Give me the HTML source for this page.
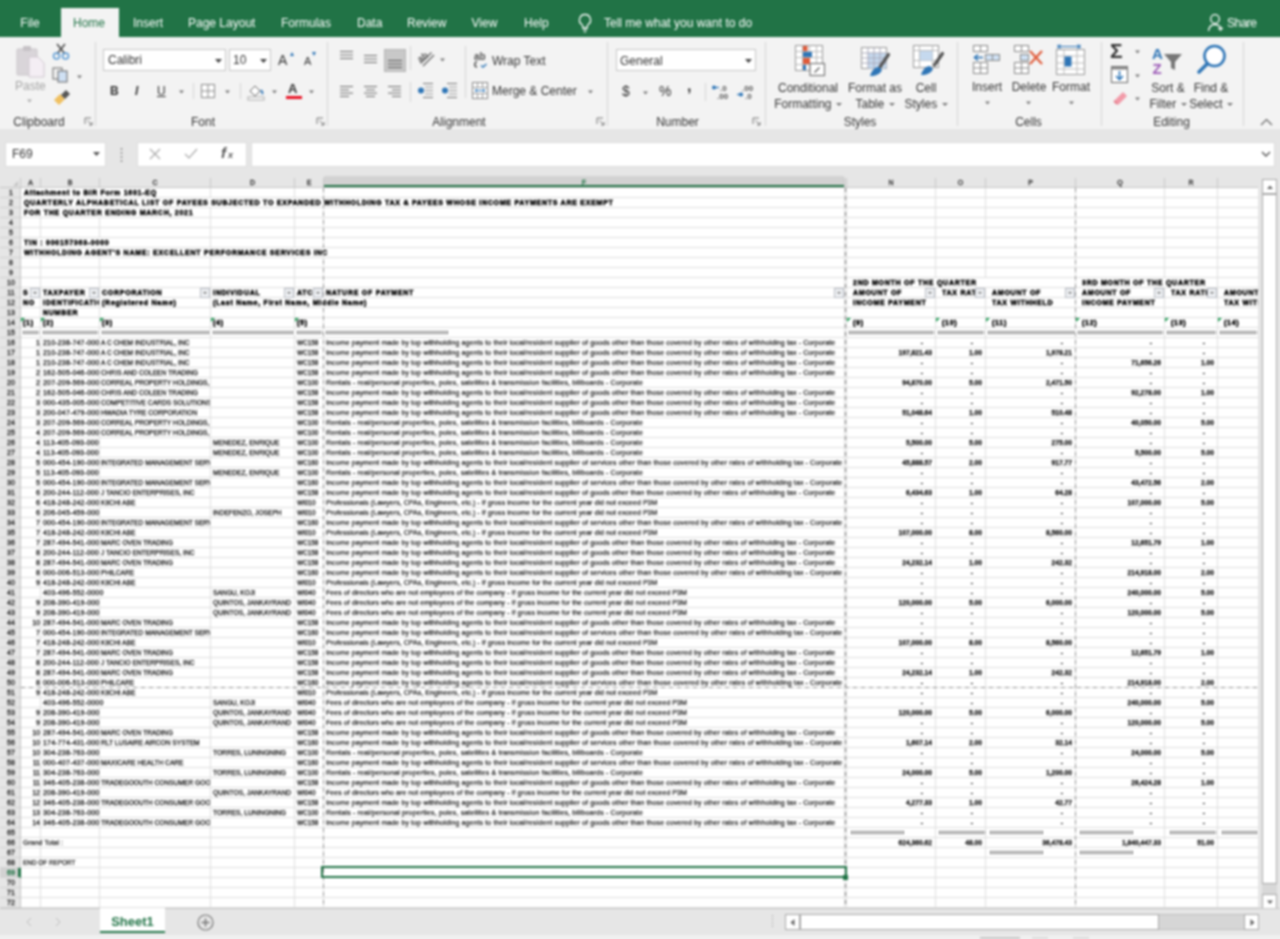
<!DOCTYPE html>
<html><head><meta charset="utf-8"><title>Excel</title>
<style>
html,body{margin:0;padding:0}
body{width:1280px;height:939px;overflow:hidden;position:relative;background:#e6e6e6;font-family:"Liberation Sans",sans-serif}
.t{position:absolute;white-space:nowrap;line-height:1.2;font-family:"Liberation Sans",sans-serif}
.c{text-align:center}
.r{position:absolute}
.s{position:absolute;overflow:visible}
.box{position:absolute;background:#fff;border:1px solid #c6c6c6;box-sizing:border-box}
.box2{position:absolute;background:#fff;border:1px solid #dcdcdc;box-sizing:border-box}
.dd{display:inline-block;width:0;height:0;border-left:3px solid transparent;border-right:3px solid transparent;border-top:3px solid #777;vertical-align:middle;margin-left:1px}
.g{position:absolute;overflow:hidden}
.gt{position:absolute;white-space:nowrap;overflow:hidden;font-family:"Liberation Sans",sans-serif;font-size:7px;line-height:10px;color:#111;-webkit-text-stroke:0.2px #111}
#root{position:absolute;left:-12px;top:-12px;width:1304px;height:963px;overflow:hidden;filter:blur(1px)}
#in{position:absolute;left:12px;top:12px;width:1280px;height:939px}
#edge{position:absolute;left:0;top:0;width:1304px;height:963px;background:linear-gradient(#217346 0 49px,#f3f3f3 49px 141px,#e6e6e6 141px 947px,#f0f0f0 947px)}
</style></head><body><div id="root"><div id="edge"></div><div id="in">
<div class="r" style="left:0px;top:0px;width:1280px;height:37px;background:#217346;"></div>
<div class="r" style="left:61px;top:8px;width:58px;height:30px;background:#f3f3f3;"></div>
<div class="t" style="left:20.3px;top:16px;font-size:12px;color:#ffffff;font-weight:normal;">File</div>
<div class="t" style="left:73px;top:16px;font-size:12px;color:#217346;font-weight:normal;">Home</div>
<div class="t" style="left:133px;top:16px;font-size:12px;color:#ffffff;font-weight:normal;">Insert</div>
<div class="t" style="left:188px;top:16px;font-size:12px;color:#ffffff;font-weight:normal;">Page Layout</div>
<div class="t" style="left:281px;top:16px;font-size:12px;color:#ffffff;font-weight:normal;">Formulas</div>
<div class="t" style="left:357px;top:16px;font-size:12px;color:#ffffff;font-weight:normal;">Data</div>
<div class="t" style="left:407px;top:16px;font-size:12px;color:#ffffff;font-weight:normal;">Review</div>
<div class="t" style="left:471.5px;top:16px;font-size:12px;color:#ffffff;font-weight:normal;">View</div>
<div class="t" style="left:524px;top:16px;font-size:12px;color:#ffffff;font-weight:normal;">Help</div>
<svg class="s" style="left:577px;top:13px;" width="16" height="20" viewBox="0 0 16 20"><path d="M8 1.5a5.5 5.5 0 0 0-3.2 10c.6.5 1 1.2 1 2v1.5h4.4V13.5c0-.8.4-1.5 1-2A5.5 5.5 0 0 0 8 1.5z" fill="none" stroke="#fff" stroke-width="1.3"/><path d="M6 17h4M6.8 19h2.4" stroke="#fff" stroke-width="1.2"/></svg>
<div class="t" style="left:604px;top:16px;font-size:12px;color:#ffffff;font-weight:normal;">Tell me what you want to do</div>
<svg class="s" style="left:1207px;top:13px;" width="17" height="19" viewBox="0 0 17 19"><circle cx="8" cy="6" r="4.3" fill="none" stroke="#fff" stroke-width="1.3"/><path d="M1.5 18c.5-4 3-6.5 6.5-6.5 2 0 3.5.6 4.6 1.7" fill="none" stroke="#fff" stroke-width="1.3"/><path d="M11 15.5h5M13.5 13v5" stroke="#fff" stroke-width="1.3"/></svg>
<div class="t" style="left:1227px;top:16px;font-size:12px;color:#ffffff;font-weight:normal;letter-spacing:-0.5px">Share</div>
<div class="r" style="left:0px;top:37px;width:1280px;height:92px;background:#f3f3f3;"></div>
<div class="r" style="left:95px;top:42px;width:1px;height:84px;background:#d4d4d4;"></div>
<div class="r" style="left:327px;top:42px;width:1px;height:84px;background:#d4d4d4;"></div>
<div class="r" style="left:607px;top:42px;width:1px;height:84px;background:#d4d4d4;"></div>
<div class="r" style="left:765px;top:42px;width:1px;height:84px;background:#d4d4d4;"></div>
<div class="r" style="left:957px;top:42px;width:1px;height:84px;background:#d4d4d4;"></div>
<div class="r" style="left:1101px;top:42px;width:1px;height:84px;background:#d4d4d4;"></div>
<div class="r" style="left:1243px;top:42px;width:1px;height:84px;background:#d4d4d4;"></div>
<div class="t c" style="left:-11px;top:115px;width:100px;font-size:12px;color:#333">Clipboard</div>
<div class="t c" style="left:153px;top:115px;width:100px;font-size:12px;color:#333">Font</div>
<div class="t c" style="left:409px;top:115px;width:100px;font-size:12px;color:#333">Alignment</div>
<div class="t c" style="left:627.5px;top:115px;width:100px;font-size:12px;color:#333">Number</div>
<div class="t c" style="left:810px;top:115px;width:100px;font-size:12px;color:#333">Styles</div>
<div class="t c" style="left:978.5px;top:115px;width:100px;font-size:12px;color:#333">Cells</div>
<div class="t c" style="left:1121.5px;top:115px;width:100px;font-size:12px;color:#333">Editing</div>
<svg class="s" style="left:84px;top:117px;" width="9" height="9" viewBox="0 0 9 9"><path d="M1 1h6M1 1v6" stroke="#777" stroke-width="1" fill="none"/><path d="M3.5 3.5L8 8M8 5v3H5" stroke="#777" stroke-width="1" fill="none"/></svg>
<svg class="s" style="left:316px;top:117px;" width="9" height="9" viewBox="0 0 9 9"><path d="M1 1h6M1 1v6" stroke="#777" stroke-width="1" fill="none"/><path d="M3.5 3.5L8 8M8 5v3H5" stroke="#777" stroke-width="1" fill="none"/></svg>
<svg class="s" style="left:596px;top:117px;" width="9" height="9" viewBox="0 0 9 9"><path d="M1 1h6M1 1v6" stroke="#777" stroke-width="1" fill="none"/><path d="M3.5 3.5L8 8M8 5v3H5" stroke="#777" stroke-width="1" fill="none"/></svg>
<svg class="s" style="left:752px;top:117px;" width="9" height="9" viewBox="0 0 9 9"><path d="M1 1h6M1 1v6" stroke="#777" stroke-width="1" fill="none"/><path d="M3.5 3.5L8 8M8 5v3H5" stroke="#777" stroke-width="1" fill="none"/></svg>
<svg class="s" style="left:1260px;top:118px;" width="13" height="8" viewBox="0 0 13 8"><path d="M1 7l5.5-5.5L12 7" stroke="#666" stroke-width="1.2" fill="none"/></svg>
<svg class="s" style="left:15px;top:44px;" width="32" height="34" viewBox="0 0 32 34"><rect x="2" y="5" width="20" height="26" rx="1" fill="#d9d5d9" stroke="#c9c5c9"/><rect x="8" y="2" width="8" height="5" rx="1" fill="#c6c2c6"/><path d="M14 13h9l6 6v14H14z" fill="#f4eef4" stroke="#d0c8d0"/></svg>
<div class="t" style="left:15px;top:79px;font-size:12px;color:#a6a6a6;font-weight:normal;">Paste</div>
<svg class="s" style="left:26px;top:99px;" width="7" height="4" viewBox="0 0 7 4"><path d="M1 0.5h5L3.5 3.5z" fill="#aaa"/></svg>
<svg class="s" style="left:52px;top:43px;" width="18" height="17" viewBox="0 0 18 17"><path d="M5 1l8 10M13 1L5 11" stroke="#444" stroke-width="1.5"/><circle cx="4.5" cy="13" r="3" fill="none" stroke="#5b9bd5" stroke-width="1.5"/><circle cx="13.5" cy="13" r="3" fill="none" stroke="#5b9bd5" stroke-width="1.5"/></svg>
<svg class="s" style="left:52px;top:67px;" width="18" height="16" viewBox="0 0 18 16"><rect x="1" y="1" width="9" height="11" fill="#f3f3f3" stroke="#666"/><rect x="6" y="4" width="9" height="11" fill="#cfe0f3" stroke="#666"/></svg>
<svg class="s" style="left:76px;top:75px;" width="7" height="4" viewBox="0 0 7 4"><path d="M1 0.5h5L3.5 3.5z" fill="#777"/></svg>
<svg class="s" style="left:53px;top:89px;" width="18" height="17" viewBox="0 0 18 17"><path d="M1 11l6-6 5 5-6 6z" fill="#f0c060"/><path d="M8 6l5-5 4 4-5 5z" fill="#555"/></svg>
<div class="box" style="left:103px;top:49px;width:123px;height:22px"></div>
<div class="t" style="left:108px;top:53px;font-size:12px;color:#333;font-weight:normal;">Calibri</div>
<svg class="s" style="left:215px;top:59px;" width="7" height="4" viewBox="0 0 7 4"><path d="M0 0h7L3.5 4z" fill="#444"/></svg>
<div class="box" style="left:229px;top:49px;width:42px;height:22px"></div>
<div class="t" style="left:233px;top:53px;font-size:12px;color:#333;font-weight:normal;">10</div>
<svg class="s" style="left:260px;top:59px;" width="7" height="4" viewBox="0 0 7 4"><path d="M0 0h7L3.5 4z" fill="#444"/></svg>
<div class="t" style="left:278px;top:52px;font-size:14px;color:#333;font-weight:normal;">A</div>
<svg class="s" style="left:290px;top:52px;" width="4" height="4" viewBox="0 0 4 4"><path d="M0 4L2 0L4 4z" fill="#2e75b6"/></svg>
<div class="t" style="left:304px;top:55px;font-size:11px;color:#333;font-weight:normal;">A</div>
<svg class="s" style="left:312px;top:52px;" width="4" height="4" viewBox="0 0 4 4"><path d="M0 0L2 4L4 0z" fill="#2e75b6"/></svg>
<div class="t" style="left:110px;top:84px;font-size:12px;color:#333;font-weight:bold;">B</div>
<div class="t" style="left:135px;top:84px;font-size:12px;color:#333;font-weight:normal;font-style:italic;font-weight:bold">I</div>
<div class="t" style="left:157px;top:84px;font-size:12px;color:#333;font-weight:normal;text-decoration:underline">U</div>
<svg class="s" style="left:178px;top:90px;" width="7" height="4" viewBox="0 0 7 4"><path d="M1 0.5h5L3.5 3.5z" fill="#777"/></svg>
<svg class="s" style="left:224px;top:90px;" width="7" height="4" viewBox="0 0 7 4"><path d="M1 0.5h5L3.5 3.5z" fill="#777"/></svg>
<svg class="s" style="left:271px;top:90px;" width="7" height="4" viewBox="0 0 7 4"><path d="M1 0.5h5L3.5 3.5z" fill="#777"/></svg>
<svg class="s" style="left:308px;top:90px;" width="7" height="4" viewBox="0 0 7 4"><path d="M1 0.5h5L3.5 3.5z" fill="#777"/></svg>
<div class="r" style="left:193px;top:83px;width:1px;height:16px;background:#d4d4d4;"></div>
<div class="r" style="left:240px;top:83px;width:1px;height:16px;background:#d4d4d4;"></div>
<svg class="s" style="left:201px;top:84px;" width="14" height="14" viewBox="0 0 14 14"><rect x="0.5" y="0.5" width="13" height="13" fill="#fff" stroke="#8a8a8a"/><path d="M7 1v12M1 7h12" stroke="#8a8a8a"/></svg>
<svg class="s" style="left:247px;top:82px;" width="18" height="18" viewBox="0 0 18 18"><path d="M3 9l5-5 5 5-5 5z" fill="#fff" stroke="#666"/><path d="M14 8c1.5 2 2 3 1 4" stroke="#2e75b6" stroke-width="2" fill="none"/><rect x="1" y="15" width="16" height="3" fill="#fff" stroke="#aaa"/></svg>
<div class="t" style="left:288px;top:81px;font-size:13px;color:#333;font-weight:bold;">A</div>
<div class="r" style="left:286px;top:96px;width:16px;height:3px;background:#e81123;"></div>
<svg class="s" style="left:340px;top:51px;" width="16" height="11" viewBox="0 0 16 11"><rect x="0" y="0.0" width="13" height="1" fill="#6a6a6a"/><rect x="0" y="3.5" width="13" height="1" fill="#6a6a6a"/><rect x="0" y="7.0" width="13" height="1" fill="#6a6a6a"/></svg>
<svg class="s" style="left:364px;top:55px;" width="16" height="11" viewBox="0 0 16 11"><rect x="0" y="0.0" width="13" height="1" fill="#6a6a6a"/><rect x="0" y="3.5" width="13" height="1" fill="#6a6a6a"/><rect x="0" y="7.0" width="13" height="1" fill="#6a6a6a"/></svg>
<div class="r" style="left:384px;top:49px;width:22px;height:23px;background:#c8c8c8;border:1px solid #b4b4b4;box-sizing:border-box"></div>
<svg class="s" style="left:388px;top:60px;" width="16" height="11" viewBox="0 0 16 11"><rect x="0" y="0.0" width="14" height="1" fill="#5a5a5a"/><rect x="0" y="3.5" width="14" height="1" fill="#5a5a5a"/><rect x="0" y="7.0" width="14" height="1" fill="#5a5a5a"/></svg>
<div class="r" style="left:410px;top:46px;width:1px;height:24px;background:#d4d4d4;"></div>
<svg class="s" style="left:417px;top:50px;" width="20" height="18" viewBox="0 0 20 18"><path d="M6 16L17 5M3.5 13.5L14.5 2.5" stroke="#666" stroke-width="1.3"/><text x="1" y="10" font-size="9" fill="#555" font-family="Liberation Sans" font-weight="bold" transform="rotate(-35 6 8)">ab</text></svg>
<svg class="s" style="left:439px;top:58px;" width="7" height="4" viewBox="0 0 7 4"><path d="M1 0.5h5L3.5 3.5z" fill="#777"/></svg>
<div class="r" style="left:465px;top:46px;width:1px;height:52px;background:#d4d4d4;"></div>
<svg class="s" style="left:473px;top:51px;" width="16" height="17" viewBox="0 0 16 17"><text x="1" y="9" font-size="10" fill="#555" font-family="Liberation Sans" font-weight="bold">ab</text><path d="M4 10.5c-3 1-3 5 0 5.5" stroke="#555" stroke-width="1.6" fill="none"/><path d="M8 14.5l2 1.5 3.5-3" stroke="#2e75b6" stroke-width="1.4" fill="none"/></svg>
<div class="t" style="left:492px;top:54px;font-size:12px;color:#333;font-weight:normal;">Wrap Text</div>
<svg class="s" style="left:340px;top:86px;" width="16" height="14" viewBox="0 0 16 14"><rect x="0" y="0.0" width="13" height="1" fill="#6a6a6a"/><rect x="0" y="3.3" width="9" height="1" fill="#6a6a6a"/><rect x="0" y="6.6" width="13" height="1" fill="#6a6a6a"/><rect x="0" y="9.9" width="9" height="1" fill="#6a6a6a"/></svg>
<svg class="s" style="left:364px;top:86px;" width="16" height="14" viewBox="0 0 16 14"><rect x="0" y="0.0" width="13" height="1" fill="#6a6a6a"/><rect x="2" y="3.3" width="9" height="1" fill="#6a6a6a"/><rect x="0" y="6.6" width="13" height="1" fill="#6a6a6a"/><rect x="2" y="9.9" width="9" height="1" fill="#6a6a6a"/></svg>
<svg class="s" style="left:388px;top:86px;" width="16" height="14" viewBox="0 0 16 14"><rect x="0" y="0.0" width="13" height="1" fill="#6a6a6a"/><rect x="4" y="3.3" width="9" height="1" fill="#6a6a6a"/><rect x="0" y="6.6" width="13" height="1" fill="#6a6a6a"/><rect x="4" y="9.9" width="9" height="1" fill="#6a6a6a"/></svg>
<div class="r" style="left:410px;top:82px;width:1px;height:20px;background:#d4d4d4;"></div>
<svg class="s" style="left:417px;top:83px;" width="17" height="15" viewBox="0 0 17 15"><rect x="6" y="0" width="10" height="1" fill="#777"/><rect x="8" y="3.5" width="8" height="1" fill="#999"/><rect x="8" y="7" width="8" height="1" fill="#999"/><rect x="8" y="10.5" width="8" height="1" fill="#999"/><rect x="6" y="14" width="10" height="1" fill="#777"/><circle cx="4" cy="7.5" r="3" fill="#2e75b6"/></svg>
<svg class="s" style="left:441px;top:83px;" width="17" height="15" viewBox="0 0 17 15"><rect x="6" y="0" width="10" height="1" fill="#777"/><rect x="8" y="3.5" width="8" height="1" fill="#999"/><rect x="8" y="7" width="8" height="1" fill="#999"/><rect x="8" y="10.5" width="8" height="1" fill="#999"/><rect x="6" y="14" width="10" height="1" fill="#777"/><circle cx="4" cy="7.5" r="3" fill="#2e75b6"/></svg>
<svg class="s" style="left:472px;top:82px;" width="17" height="17" viewBox="0 0 17 17"><rect x="0.5" y="0.5" width="15" height="16" fill="#fff" stroke="#888"/><path d="M0.5 5.5h15M0.5 11.5h15M5.5 0.5v5M10.5 0.5v5M5.5 11.5v5M10.5 11.5v5" stroke="#999"/><path d="M3 8.5h10M3 8.5l2-1.5M3 8.5l2 1.5M13 8.5l-2-1.5M13 8.5l-2 1.5" stroke="#2e75b6"/></svg>
<div class="t" style="left:492px;top:84px;font-size:12px;color:#333;font-weight:normal;">Merge &amp; Center</div>
<svg class="s" style="left:587px;top:90px;" width="7" height="4" viewBox="0 0 7 4"><path d="M1 0.5h5L3.5 3.5z" fill="#777"/></svg>
<div class="box" style="left:616px;top:49px;width:140px;height:22px"></div>
<div class="t" style="left:620px;top:54px;font-size:12px;color:#333;font-weight:normal;">General</div>
<svg class="s" style="left:745px;top:59px;" width="7" height="4" viewBox="0 0 7 4"><path d="M0 0h7L3.5 4z" fill="#444"/></svg>
<div class="t" style="left:622px;top:83px;font-size:14px;color:#333;font-weight:normal;">$</div>
<svg class="s" style="left:642px;top:91px;" width="7" height="4" viewBox="0 0 7 4"><path d="M1 0.5h5L3.5 3.5z" fill="#777"/></svg>
<div class="t" style="left:659px;top:83px;font-size:14px;color:#333;font-weight:normal;">%</div>
<div class="t" style="left:687px;top:76px;font-size:16px;color:#333;font-weight:bold;">,</div>
<div class="r" style="left:705px;top:83px;width:1px;height:18px;background:#d4d4d4;"></div>
<svg class="s" style="left:711px;top:83px;" width="20" height="17" viewBox="0 0 20 17"><text x="9" y="8" font-size="8" fill="#555" font-family="Liberation Sans" font-weight="bold">.0</text><text x="6" y="15.5" font-size="8" fill="#555" font-family="Liberation Sans" font-weight="bold">.00</text><circle cx="3" cy="4.5" r="2" fill="#2e75b6"/><path d="M3 4.5h5" stroke="#2e75b6" stroke-width="1.2"/></svg>
<svg class="s" style="left:736px;top:83px;" width="20" height="17" viewBox="0 0 20 17"><text x="6" y="8" font-size="8" fill="#555" font-family="Liberation Sans" font-weight="bold">.00</text><text x="9" y="15.5" font-size="8" fill="#555" font-family="Liberation Sans" font-weight="bold">.0</text><circle cx="5" cy="11.5" r="2" fill="#2e75b6"/><path d="M1 11.5h6" stroke="#2e75b6" stroke-width="1.2"/></svg>
<svg class="s" style="left:795px;top:45px;" width="31" height="31" viewBox="0 0 31 31"><rect x="0.5" y="0.5" width="27" height="25" fill="#fff" stroke="#999"/><path d="M7.5 0.5v25M14.5 0.5v25M21.5 0.5v25M0.5 6.5h27M0.5 12.5h27M0.5 19.5h27" stroke="#bbb"/><rect x="8" y="1" width="4.5" height="5" fill="#e05b3a"/><rect x="8" y="7" width="9" height="5" fill="#2e75b6"/><rect x="8" y="13" width="7" height="6" fill="#e05b3a"/><rect x="8" y="20" width="3" height="5" fill="#2e75b6"/><rect x="15" y="18.5" width="14.5" height="12" fill="#fff" stroke="#777" stroke-width="1.2"/><path d="M19.5 27.5l5-5" stroke="#666" stroke-width="1.5"/></svg>
<div class="t c" style="left:768px;top:80px;width:80px;font-size:12px;color:#333;line-height:16px">Conditional<br>Formatting <span class="dd"></span></div>
<svg class="s" style="left:861px;top:45px;" width="32" height="32" viewBox="0 0 32 32"><rect x="0.5" y="2.5" width="25" height="21" fill="#fff" stroke="#999"/><rect x="7" y="8" width="18.5" height="15.5" fill="#c5d9ee"/><path d="M7 2.5v21M13 2.5v21M19 2.5v21M0.5 8h25M0.5 13h25M0.5 18h25" stroke="#aab"/><path d="M27.5 9.5L19 22" stroke="#555" stroke-width="3.2" stroke-linecap="round"/><path d="M9 31c1-4 4-9 9-9l3 3c-2 4-6 6-12 6z" fill="#2e75b6"/></svg>
<div class="t c" style="left:835px;top:80px;width:80px;font-size:12px;color:#333;line-height:16px">Format as<br>Table <span class="dd"></span></div>
<svg class="s" style="left:913px;top:45px;" width="31" height="32" viewBox="0 0 31 32"><rect x="0.5" y="0.5" width="25" height="22" fill="#fff" stroke="#999"/><path d="M6.5 0.5v22M19.5 0.5v22M0.5 5.5h25M0.5 15.5h25" stroke="#bbb"/><rect x="7" y="6" width="12.5" height="9.5" fill="#c5d9ee"/><path d="M29.5 8.5L21.5 20" stroke="#555" stroke-width="3.2" stroke-linecap="round"/><path d="M8 30c1-4 4-9 9-9l3 3c-2 4-6 6-12 6z" fill="#2e75b6"/></svg>
<div class="t c" style="left:886px;top:80px;width:80px;font-size:12px;color:#333;line-height:16px">Cell<br>Styles <span class="dd"></span></div>
<svg class="s" style="left:972px;top:44px;" width="30" height="31" viewBox="0 0 30 31"><rect x="1.5" y="1.5" width="7" height="6" fill="#fff" stroke="#888"/><rect x="8.5" y="1.5" width="7" height="6" fill="#fff" stroke="#888"/><rect x="13.5" y="10.5" width="7" height="6" fill="#cfe0f3" stroke="#888"/><rect x="20.5" y="10.5" width="7" height="6" fill="#cfe0f3" stroke="#888"/><path d="M11 13.5H3M6 10.5L2.5 13.5 6 16.5" stroke="#2e75b6" stroke-width="1.6" fill="none"/><rect x="1.5" y="18.5" width="14" height="11" fill="#fff" stroke="#888"/><path d="M8.5 18.5v11M1.5 24h14" stroke="#888"/></svg>
<svg class="s" style="left:1013px;top:44px;" width="33" height="31" viewBox="0 0 33 31"><rect x="1.5" y="1.5" width="7" height="6" fill="#fff" stroke="#888"/><rect x="8.5" y="1.5" width="7" height="6" fill="#fff" stroke="#888"/><rect x="7.5" y="10.5" width="8" height="6" fill="#cfe0f3" stroke="#888"/><path d="M17 7l12 13M29 7L17 20" stroke="#e05b3a" stroke-width="2.2"/><rect x="1.5" y="18.5" width="14" height="11" fill="#fff" stroke="#888"/><path d="M8.5 18.5v11M1.5 24h14" stroke="#888"/></svg>
<svg class="s" style="left:1056px;top:44px;" width="31" height="33" viewBox="0 0 31 33"><path d="M2 2.5h22M2 0.5v4M24 0.5v4M2 2.5l3-2M2 2.5l3 2M24 2.5l-3-2M24 2.5l-3 2" stroke="#2e75b6" fill="none"/><rect x="0.5" y="5.5" width="28" height="25" fill="#fff" stroke="#999"/><path d="M0.5 12h28M0.5 19h28M0.5 25h28M8 5.5v25M21 5.5v25" stroke="#bbb"/><rect x="8.5" y="12.5" width="7" height="10" fill="#2e75b6"/></svg>
<div class="t c" style="left:957px;top:80px;width:60px;font-size:12px;color:#333">Insert</div>
<div class="t c" style="left:999px;top:80px;width:60px;font-size:12px;color:#333">Delete</div>
<div class="t c" style="left:1041px;top:80px;width:60px;font-size:12px;color:#333">Format</div>
<svg class="s" style="left:984px;top:101px;" width="7" height="4" viewBox="0 0 7 4"><path d="M1 0.5h5L3.5 3.5z" fill="#777"/></svg>
<svg class="s" style="left:1025px;top:101px;" width="7" height="4" viewBox="0 0 7 4"><path d="M1 0.5h5L3.5 3.5z" fill="#777"/></svg>
<svg class="s" style="left:1068px;top:101px;" width="7" height="4" viewBox="0 0 7 4"><path d="M1 0.5h5L3.5 3.5z" fill="#777"/></svg>
<div class="t" style="left:1110px;top:38px;font-size:21px;color:#333;font-weight:bold;">Σ</div>
<svg class="s" style="left:1134px;top:50px;" width="7" height="4" viewBox="0 0 7 4"><path d="M1 0.5h5L3.5 3.5z" fill="#777"/></svg>
<svg class="s" style="left:1111px;top:66px;" width="17" height="17" viewBox="0 0 17 17"><rect x="0.5" y="0.5" width="16" height="16" fill="#fff" stroke="#666"/><rect x="0.5" y="0.5" width="16" height="3" fill="#888"/><path d="M8.5 5v8M5 10l3.5 3.5L12 10" stroke="#2e75b6" stroke-width="1.6" fill="none"/></svg>
<svg class="s" style="left:1134px;top:74px;" width="7" height="4" viewBox="0 0 7 4"><path d="M1 0.5h5L3.5 3.5z" fill="#777"/></svg>
<svg class="s" style="left:1112px;top:90px;" width="16" height="14" viewBox="0 0 16 14"><path d="M2 11l9-9 4 4-9 9z" fill="#f29aa8"/><path d="M2 11l3 3" stroke="#e07080" stroke-width="1.5"/></svg>
<svg class="s" style="left:1134px;top:97px;" width="7" height="4" viewBox="0 0 7 4"><path d="M1 0.5h5L3.5 3.5z" fill="#777"/></svg>
<svg class="s" style="left:1151px;top:45px;" width="33" height="30" viewBox="0 0 33 30"><text x="1" y="14" font-size="15" fill="#2e75b6" font-family="Liberation Sans" font-weight="bold">A</text><text x="1.5" y="29" font-size="15" fill="#9b59b6" font-family="Liberation Sans" font-weight="bold">Z</text><path d="M13 9h18l-7 8v8l-4-2v-6z" fill="#777"/></svg>
<div class="t c" style="left:1128px;top:80px;width:80px;font-size:12px;color:#333;line-height:16px">Sort &amp;<br>Filter <span class="dd"></span></div>
<svg class="s" style="left:1196px;top:43px;" width="32" height="32" viewBox="0 0 32 32"><circle cx="18.5" cy="13" r="10" fill="#fff" stroke="#2e75b6" stroke-width="2.6"/><path d="M11 21L3 29" stroke="#2e75b6" stroke-width="3.6" stroke-linecap="round"/></svg>
<div class="t c" style="left:1171px;top:80px;width:80px;font-size:12px;color:#333;line-height:16px">Find &amp;<br>Select <span class="dd"></span></div>
<div class="r" style="left:0px;top:129px;width:1280px;height:59px;background:#e6e6e6;"></div>
<div class="box2" style="left:5px;top:142px;width:101px;height:25px"></div>
<div class="t" style="left:12px;top:147px;font-size:12px;color:#333;font-weight:normal;">F69</div>
<svg class="s" style="left:93px;top:152px;" width="7" height="4" viewBox="0 0 7 4"><path d="M0 0h7L3.5 4z" fill="#555"/></svg>
<svg class="s" style="left:120px;top:147px;" width="3" height="16" viewBox="0 0 3 16"><circle cx="1.5" cy="2" r="0.9" fill="#888"/><circle cx="1.5" cy="6" r="0.9" fill="#888"/><circle cx="1.5" cy="10" r="0.9" fill="#888"/><circle cx="1.5" cy="14" r="0.9" fill="#888"/></svg>
<div class="box2" style="left:137px;top:142px;width:110px;height:25px"></div>
<svg class="s" style="left:149px;top:148px;" width="12" height="12" viewBox="0 0 12 12"><path d="M1 1l10 10M11 1L1 11" stroke="#aaa" stroke-width="1.2"/></svg>
<svg class="s" style="left:184px;top:148px;" width="14" height="12" viewBox="0 0 14 12"><path d="M1 6l4 4 8-9" stroke="#aaa" stroke-width="1.2" fill="none"/></svg>
<div class="t" style="left:221px;top:144px;font-size:15px;color:#555;font-weight:normal;font-style:italic;font-weight:bold;font-family:"Liberation Serif",serif">f</div>
<div class="t" style="left:228px;top:150px;font-size:9px;color:#555;font-weight:normal;font-style:italic;font-weight:bold;font-family:"Liberation Serif",serif">x</div>
<div class="box2" style="left:251px;top:142px;width:1024px;height:25px"></div>
<svg class="s" style="left:1261px;top:151px;" width="10" height="6" viewBox="0 0 10 6"><path d="M1 1l4 4 4-4" stroke="#555" stroke-width="1.4" fill="none"/></svg>
<div class="r" style="left:21px;top:188px;width:1237px;height:720px;background:#fff"></div>
<div class="r" style="left:0px;top:176px;width:1258px;height:11px;background:#e6e6e6"></div>
<div class="r" style="left:324px;top:176px;width:520px;height:11px;background:#d2d2d2"></div>
<div class="r" style="left:0px;top:187px;width:1258px;height:1px;background:#c4c4c4"></div>
<div class="r" style="left:324px;top:185px;width:521px;height:2px;background:#217346"></div>
<div class="r" style="left:40px;top:178px;width:1px;height:9px;background:#c8c8c8"></div>
<div class="r" style="left:99px;top:178px;width:1px;height:9px;background:#c8c8c8"></div>
<div class="r" style="left:210px;top:178px;width:1px;height:9px;background:#c8c8c8"></div>
<div class="r" style="left:294px;top:178px;width:1px;height:9px;background:#c8c8c8"></div>
<div class="r" style="left:323px;top:178px;width:1px;height:9px;background:#c8c8c8"></div>
<div class="r" style="left:844px;top:178px;width:1px;height:9px;background:#c8c8c8"></div>
<div class="r" style="left:935px;top:178px;width:1px;height:9px;background:#c8c8c8"></div>
<div class="r" style="left:985px;top:178px;width:1px;height:9px;background:#c8c8c8"></div>
<div class="r" style="left:1075px;top:178px;width:1px;height:9px;background:#c8c8c8"></div>
<div class="r" style="left:1164px;top:178px;width:1px;height:9px;background:#c8c8c8"></div>
<div class="r" style="left:1217px;top:178px;width:1px;height:9px;background:#c8c8c8"></div>
<div class="r" style="left:846px;top:178px;width:1px;height:9px;background:#c8c8c8"></div>
<div class="r" style="left:20px;top:178px;width:1px;height:9px;background:#c8c8c8"></div>
<svg class="s" style="left:13px;top:181px" width="5" height="5"><path d="M5 0v5H0z" fill="#c4c4c4"/></svg>
<div class="gt" style="left:21px;top:178px;width:19px;height:9px;text-align:center;color:#333;-webkit-text-stroke:0.35px #333;font-size:7px;line-height:10px">A</div>
<div class="gt" style="left:41px;top:178px;width:58px;height:9px;text-align:center;color:#333;-webkit-text-stroke:0.35px #333;font-size:7px;line-height:10px">B</div>
<div class="gt" style="left:100px;top:178px;width:110px;height:9px;text-align:center;color:#333;-webkit-text-stroke:0.35px #333;font-size:7px;line-height:10px">C</div>
<div class="gt" style="left:211px;top:178px;width:83px;height:9px;text-align:center;color:#333;-webkit-text-stroke:0.35px #333;font-size:7px;line-height:10px">D</div>
<div class="gt" style="left:295px;top:178px;width:28px;height:9px;text-align:center;color:#333;-webkit-text-stroke:0.35px #333;font-size:7px;line-height:10px">E</div>
<div class="gt" style="left:324px;top:178px;width:520px;height:9px;text-align:center;color:#217346;-webkit-text-stroke:0.35px #217346;font-size:7px;line-height:10px">F</div>
<div class="gt" style="left:847px;top:178px;width:88px;height:9px;text-align:center;color:#333;-webkit-text-stroke:0.35px #333;font-size:7px;line-height:10px">N</div>
<div class="gt" style="left:936px;top:178px;width:49px;height:9px;text-align:center;color:#333;-webkit-text-stroke:0.35px #333;font-size:7px;line-height:10px">O</div>
<div class="gt" style="left:986px;top:178px;width:89px;height:9px;text-align:center;color:#333;-webkit-text-stroke:0.35px #333;font-size:7px;line-height:10px">P</div>
<div class="gt" style="left:1076px;top:178px;width:88px;height:9px;text-align:center;color:#333;-webkit-text-stroke:0.35px #333;font-size:7px;line-height:10px">Q</div>
<div class="gt" style="left:1165px;top:178px;width:52px;height:9px;text-align:center;color:#333;-webkit-text-stroke:0.35px #333;font-size:7px;line-height:10px">R</div>
<div class="r" style="left:0px;top:188px;width:20px;height:720px;background:#e6e6e6"></div>
<div class="r" style="left:20px;top:188px;width:1px;height:720px;background:#c4c4c4"></div>
<div class="r" style="left:0px;top:868px;width:20px;height:10px;background:#d2d2d2"></div>
<div class="r" style="left:18px;top:868px;width:3px;height:10px;background:#217346"></div>
<div class="gt" style="left:1px;top:188px;width:20px;height:9px;text-align:center;color:#333;-webkit-text-stroke:0.35px #333">1</div>
<div class="r" style="left:0px;top:197px;width:20px;height:1px;background:#d0d0d0"></div>
<div class="gt" style="left:1px;top:198px;width:20px;height:9px;text-align:center;color:#333;-webkit-text-stroke:0.35px #333">2</div>
<div class="r" style="left:0px;top:207px;width:20px;height:1px;background:#d0d0d0"></div>
<div class="gt" style="left:1px;top:208px;width:20px;height:9px;text-align:center;color:#333;-webkit-text-stroke:0.35px #333">3</div>
<div class="r" style="left:0px;top:217px;width:20px;height:1px;background:#d0d0d0"></div>
<div class="gt" style="left:1px;top:218px;width:20px;height:9px;text-align:center;color:#333;-webkit-text-stroke:0.35px #333">4</div>
<div class="r" style="left:0px;top:227px;width:20px;height:1px;background:#d0d0d0"></div>
<div class="gt" style="left:1px;top:228px;width:20px;height:9px;text-align:center;color:#333;-webkit-text-stroke:0.35px #333">5</div>
<div class="r" style="left:0px;top:237px;width:20px;height:1px;background:#d0d0d0"></div>
<div class="gt" style="left:1px;top:238px;width:20px;height:9px;text-align:center;color:#333;-webkit-text-stroke:0.35px #333">6</div>
<div class="r" style="left:0px;top:247px;width:20px;height:1px;background:#d0d0d0"></div>
<div class="gt" style="left:1px;top:248px;width:20px;height:9px;text-align:center;color:#333;-webkit-text-stroke:0.35px #333">7</div>
<div class="r" style="left:0px;top:257px;width:20px;height:1px;background:#d0d0d0"></div>
<div class="gt" style="left:1px;top:258px;width:20px;height:9px;text-align:center;color:#333;-webkit-text-stroke:0.35px #333">8</div>
<div class="r" style="left:0px;top:267px;width:20px;height:1px;background:#d0d0d0"></div>
<div class="gt" style="left:1px;top:268px;width:20px;height:9px;text-align:center;color:#333;-webkit-text-stroke:0.35px #333">9</div>
<div class="r" style="left:0px;top:277px;width:20px;height:1px;background:#d0d0d0"></div>
<div class="gt" style="left:1px;top:278px;width:20px;height:9px;text-align:center;color:#333;-webkit-text-stroke:0.35px #333">10</div>
<div class="r" style="left:0px;top:287px;width:20px;height:1px;background:#d0d0d0"></div>
<div class="gt" style="left:1px;top:288px;width:20px;height:9px;text-align:center;color:#333;-webkit-text-stroke:0.35px #333">11</div>
<div class="r" style="left:0px;top:297px;width:20px;height:1px;background:#d0d0d0"></div>
<div class="gt" style="left:1px;top:298px;width:20px;height:9px;text-align:center;color:#333;-webkit-text-stroke:0.35px #333">12</div>
<div class="r" style="left:0px;top:307px;width:20px;height:1px;background:#d0d0d0"></div>
<div class="gt" style="left:1px;top:308px;width:20px;height:9px;text-align:center;color:#333;-webkit-text-stroke:0.35px #333">13</div>
<div class="r" style="left:0px;top:317px;width:20px;height:1px;background:#d0d0d0"></div>
<div class="gt" style="left:1px;top:318px;width:20px;height:9px;text-align:center;color:#333;-webkit-text-stroke:0.35px #333">14</div>
<div class="r" style="left:0px;top:327px;width:20px;height:1px;background:#d0d0d0"></div>
<div class="gt" style="left:1px;top:328px;width:20px;height:9px;text-align:center;color:#333;-webkit-text-stroke:0.35px #333">15</div>
<div class="r" style="left:0px;top:337px;width:20px;height:1px;background:#d0d0d0"></div>
<div class="gt" style="left:1px;top:338px;width:20px;height:9px;text-align:center;color:#333;-webkit-text-stroke:0.35px #333">16</div>
<div class="r" style="left:0px;top:347px;width:20px;height:1px;background:#d0d0d0"></div>
<div class="gt" style="left:1px;top:348px;width:20px;height:9px;text-align:center;color:#333;-webkit-text-stroke:0.35px #333">17</div>
<div class="r" style="left:0px;top:357px;width:20px;height:1px;background:#d0d0d0"></div>
<div class="gt" style="left:1px;top:358px;width:20px;height:9px;text-align:center;color:#333;-webkit-text-stroke:0.35px #333">18</div>
<div class="r" style="left:0px;top:367px;width:20px;height:1px;background:#d0d0d0"></div>
<div class="gt" style="left:1px;top:368px;width:20px;height:9px;text-align:center;color:#333;-webkit-text-stroke:0.35px #333">19</div>
<div class="r" style="left:0px;top:377px;width:20px;height:1px;background:#d0d0d0"></div>
<div class="gt" style="left:1px;top:378px;width:20px;height:9px;text-align:center;color:#333;-webkit-text-stroke:0.35px #333">20</div>
<div class="r" style="left:0px;top:387px;width:20px;height:1px;background:#d0d0d0"></div>
<div class="gt" style="left:1px;top:388px;width:20px;height:9px;text-align:center;color:#333;-webkit-text-stroke:0.35px #333">21</div>
<div class="r" style="left:0px;top:397px;width:20px;height:1px;background:#d0d0d0"></div>
<div class="gt" style="left:1px;top:398px;width:20px;height:9px;text-align:center;color:#333;-webkit-text-stroke:0.35px #333">22</div>
<div class="r" style="left:0px;top:407px;width:20px;height:1px;background:#d0d0d0"></div>
<div class="gt" style="left:1px;top:408px;width:20px;height:9px;text-align:center;color:#333;-webkit-text-stroke:0.35px #333">23</div>
<div class="r" style="left:0px;top:417px;width:20px;height:1px;background:#d0d0d0"></div>
<div class="gt" style="left:1px;top:418px;width:20px;height:9px;text-align:center;color:#333;-webkit-text-stroke:0.35px #333">24</div>
<div class="r" style="left:0px;top:427px;width:20px;height:1px;background:#d0d0d0"></div>
<div class="gt" style="left:1px;top:428px;width:20px;height:9px;text-align:center;color:#333;-webkit-text-stroke:0.35px #333">25</div>
<div class="r" style="left:0px;top:437px;width:20px;height:1px;background:#d0d0d0"></div>
<div class="gt" style="left:1px;top:438px;width:20px;height:9px;text-align:center;color:#333;-webkit-text-stroke:0.35px #333">26</div>
<div class="r" style="left:0px;top:447px;width:20px;height:1px;background:#d0d0d0"></div>
<div class="gt" style="left:1px;top:448px;width:20px;height:9px;text-align:center;color:#333;-webkit-text-stroke:0.35px #333">27</div>
<div class="r" style="left:0px;top:457px;width:20px;height:1px;background:#d0d0d0"></div>
<div class="gt" style="left:1px;top:458px;width:20px;height:9px;text-align:center;color:#333;-webkit-text-stroke:0.35px #333">28</div>
<div class="r" style="left:0px;top:467px;width:20px;height:1px;background:#d0d0d0"></div>
<div class="gt" style="left:1px;top:468px;width:20px;height:9px;text-align:center;color:#333;-webkit-text-stroke:0.35px #333">29</div>
<div class="r" style="left:0px;top:477px;width:20px;height:1px;background:#d0d0d0"></div>
<div class="gt" style="left:1px;top:478px;width:20px;height:9px;text-align:center;color:#333;-webkit-text-stroke:0.35px #333">30</div>
<div class="r" style="left:0px;top:487px;width:20px;height:1px;background:#d0d0d0"></div>
<div class="gt" style="left:1px;top:488px;width:20px;height:9px;text-align:center;color:#333;-webkit-text-stroke:0.35px #333">31</div>
<div class="r" style="left:0px;top:497px;width:20px;height:1px;background:#d0d0d0"></div>
<div class="gt" style="left:1px;top:498px;width:20px;height:9px;text-align:center;color:#333;-webkit-text-stroke:0.35px #333">32</div>
<div class="r" style="left:0px;top:507px;width:20px;height:1px;background:#d0d0d0"></div>
<div class="gt" style="left:1px;top:508px;width:20px;height:9px;text-align:center;color:#333;-webkit-text-stroke:0.35px #333">33</div>
<div class="r" style="left:0px;top:517px;width:20px;height:1px;background:#d0d0d0"></div>
<div class="gt" style="left:1px;top:518px;width:20px;height:9px;text-align:center;color:#333;-webkit-text-stroke:0.35px #333">34</div>
<div class="r" style="left:0px;top:527px;width:20px;height:1px;background:#d0d0d0"></div>
<div class="gt" style="left:1px;top:528px;width:20px;height:9px;text-align:center;color:#333;-webkit-text-stroke:0.35px #333">35</div>
<div class="r" style="left:0px;top:537px;width:20px;height:1px;background:#d0d0d0"></div>
<div class="gt" style="left:1px;top:538px;width:20px;height:9px;text-align:center;color:#333;-webkit-text-stroke:0.35px #333">36</div>
<div class="r" style="left:0px;top:547px;width:20px;height:1px;background:#d0d0d0"></div>
<div class="gt" style="left:1px;top:548px;width:20px;height:9px;text-align:center;color:#333;-webkit-text-stroke:0.35px #333">37</div>
<div class="r" style="left:0px;top:557px;width:20px;height:1px;background:#d0d0d0"></div>
<div class="gt" style="left:1px;top:558px;width:20px;height:9px;text-align:center;color:#333;-webkit-text-stroke:0.35px #333">38</div>
<div class="r" style="left:0px;top:567px;width:20px;height:1px;background:#d0d0d0"></div>
<div class="gt" style="left:1px;top:568px;width:20px;height:9px;text-align:center;color:#333;-webkit-text-stroke:0.35px #333">39</div>
<div class="r" style="left:0px;top:577px;width:20px;height:1px;background:#d0d0d0"></div>
<div class="gt" style="left:1px;top:578px;width:20px;height:9px;text-align:center;color:#333;-webkit-text-stroke:0.35px #333">40</div>
<div class="r" style="left:0px;top:587px;width:20px;height:1px;background:#d0d0d0"></div>
<div class="gt" style="left:1px;top:588px;width:20px;height:9px;text-align:center;color:#333;-webkit-text-stroke:0.35px #333">41</div>
<div class="r" style="left:0px;top:597px;width:20px;height:1px;background:#d0d0d0"></div>
<div class="gt" style="left:1px;top:598px;width:20px;height:9px;text-align:center;color:#333;-webkit-text-stroke:0.35px #333">42</div>
<div class="r" style="left:0px;top:607px;width:20px;height:1px;background:#d0d0d0"></div>
<div class="gt" style="left:1px;top:608px;width:20px;height:9px;text-align:center;color:#333;-webkit-text-stroke:0.35px #333">43</div>
<div class="r" style="left:0px;top:617px;width:20px;height:1px;background:#d0d0d0"></div>
<div class="gt" style="left:1px;top:618px;width:20px;height:9px;text-align:center;color:#333;-webkit-text-stroke:0.35px #333">44</div>
<div class="r" style="left:0px;top:627px;width:20px;height:1px;background:#d0d0d0"></div>
<div class="gt" style="left:1px;top:628px;width:20px;height:9px;text-align:center;color:#333;-webkit-text-stroke:0.35px #333">45</div>
<div class="r" style="left:0px;top:637px;width:20px;height:1px;background:#d0d0d0"></div>
<div class="gt" style="left:1px;top:638px;width:20px;height:9px;text-align:center;color:#333;-webkit-text-stroke:0.35px #333">46</div>
<div class="r" style="left:0px;top:647px;width:20px;height:1px;background:#d0d0d0"></div>
<div class="gt" style="left:1px;top:648px;width:20px;height:9px;text-align:center;color:#333;-webkit-text-stroke:0.35px #333">47</div>
<div class="r" style="left:0px;top:657px;width:20px;height:1px;background:#d0d0d0"></div>
<div class="gt" style="left:1px;top:658px;width:20px;height:9px;text-align:center;color:#333;-webkit-text-stroke:0.35px #333">48</div>
<div class="r" style="left:0px;top:667px;width:20px;height:1px;background:#d0d0d0"></div>
<div class="gt" style="left:1px;top:668px;width:20px;height:9px;text-align:center;color:#333;-webkit-text-stroke:0.35px #333">49</div>
<div class="r" style="left:0px;top:677px;width:20px;height:1px;background:#d0d0d0"></div>
<div class="gt" style="left:1px;top:678px;width:20px;height:9px;text-align:center;color:#333;-webkit-text-stroke:0.35px #333">50</div>
<div class="r" style="left:0px;top:687px;width:20px;height:1px;background:#d0d0d0"></div>
<div class="gt" style="left:1px;top:688px;width:20px;height:9px;text-align:center;color:#333;-webkit-text-stroke:0.35px #333">51</div>
<div class="r" style="left:0px;top:697px;width:20px;height:1px;background:#d0d0d0"></div>
<div class="gt" style="left:1px;top:698px;width:20px;height:9px;text-align:center;color:#333;-webkit-text-stroke:0.35px #333">52</div>
<div class="r" style="left:0px;top:707px;width:20px;height:1px;background:#d0d0d0"></div>
<div class="gt" style="left:1px;top:708px;width:20px;height:9px;text-align:center;color:#333;-webkit-text-stroke:0.35px #333">53</div>
<div class="r" style="left:0px;top:717px;width:20px;height:1px;background:#d0d0d0"></div>
<div class="gt" style="left:1px;top:718px;width:20px;height:9px;text-align:center;color:#333;-webkit-text-stroke:0.35px #333">54</div>
<div class="r" style="left:0px;top:727px;width:20px;height:1px;background:#d0d0d0"></div>
<div class="gt" style="left:1px;top:728px;width:20px;height:9px;text-align:center;color:#333;-webkit-text-stroke:0.35px #333">55</div>
<div class="r" style="left:0px;top:737px;width:20px;height:1px;background:#d0d0d0"></div>
<div class="gt" style="left:1px;top:738px;width:20px;height:9px;text-align:center;color:#333;-webkit-text-stroke:0.35px #333">56</div>
<div class="r" style="left:0px;top:747px;width:20px;height:1px;background:#d0d0d0"></div>
<div class="gt" style="left:1px;top:748px;width:20px;height:9px;text-align:center;color:#333;-webkit-text-stroke:0.35px #333">57</div>
<div class="r" style="left:0px;top:757px;width:20px;height:1px;background:#d0d0d0"></div>
<div class="gt" style="left:1px;top:758px;width:20px;height:9px;text-align:center;color:#333;-webkit-text-stroke:0.35px #333">58</div>
<div class="r" style="left:0px;top:767px;width:20px;height:1px;background:#d0d0d0"></div>
<div class="gt" style="left:1px;top:768px;width:20px;height:9px;text-align:center;color:#333;-webkit-text-stroke:0.35px #333">59</div>
<div class="r" style="left:0px;top:777px;width:20px;height:1px;background:#d0d0d0"></div>
<div class="gt" style="left:1px;top:778px;width:20px;height:9px;text-align:center;color:#333;-webkit-text-stroke:0.35px #333">60</div>
<div class="r" style="left:0px;top:787px;width:20px;height:1px;background:#d0d0d0"></div>
<div class="gt" style="left:1px;top:788px;width:20px;height:9px;text-align:center;color:#333;-webkit-text-stroke:0.35px #333">61</div>
<div class="r" style="left:0px;top:797px;width:20px;height:1px;background:#d0d0d0"></div>
<div class="gt" style="left:1px;top:798px;width:20px;height:9px;text-align:center;color:#333;-webkit-text-stroke:0.35px #333">62</div>
<div class="r" style="left:0px;top:807px;width:20px;height:1px;background:#d0d0d0"></div>
<div class="gt" style="left:1px;top:808px;width:20px;height:9px;text-align:center;color:#333;-webkit-text-stroke:0.35px #333">63</div>
<div class="r" style="left:0px;top:817px;width:20px;height:1px;background:#d0d0d0"></div>
<div class="gt" style="left:1px;top:818px;width:20px;height:9px;text-align:center;color:#333;-webkit-text-stroke:0.35px #333">64</div>
<div class="r" style="left:0px;top:827px;width:20px;height:1px;background:#d0d0d0"></div>
<div class="gt" style="left:1px;top:828px;width:20px;height:9px;text-align:center;color:#333;-webkit-text-stroke:0.35px #333">65</div>
<div class="r" style="left:0px;top:837px;width:20px;height:1px;background:#d0d0d0"></div>
<div class="gt" style="left:1px;top:838px;width:20px;height:9px;text-align:center;color:#333;-webkit-text-stroke:0.35px #333">66</div>
<div class="r" style="left:0px;top:847px;width:20px;height:1px;background:#d0d0d0"></div>
<div class="gt" style="left:1px;top:848px;width:20px;height:9px;text-align:center;color:#333;-webkit-text-stroke:0.35px #333">67</div>
<div class="r" style="left:0px;top:857px;width:20px;height:1px;background:#d0d0d0"></div>
<div class="gt" style="left:1px;top:858px;width:20px;height:9px;text-align:center;color:#333;-webkit-text-stroke:0.35px #333">68</div>
<div class="r" style="left:0px;top:867px;width:20px;height:1px;background:#d0d0d0"></div>
<div class="gt" style="left:1px;top:868px;width:20px;height:9px;text-align:center;color:#217346;-webkit-text-stroke:0.35px #217346">69</div>
<div class="r" style="left:0px;top:877px;width:20px;height:1px;background:#d0d0d0"></div>
<div class="gt" style="left:1px;top:878px;width:20px;height:9px;text-align:center;color:#333;-webkit-text-stroke:0.35px #333">70</div>
<div class="r" style="left:0px;top:887px;width:20px;height:1px;background:#d0d0d0"></div>
<div class="gt" style="left:1px;top:888px;width:20px;height:9px;text-align:center;color:#333;-webkit-text-stroke:0.35px #333">71</div>
<div class="r" style="left:0px;top:897px;width:20px;height:1px;background:#d0d0d0"></div>
<div class="gt" style="left:1px;top:898px;width:20px;height:9px;text-align:center;color:#333;-webkit-text-stroke:0.35px #333">72</div>
<div class="r" style="left:0px;top:907px;width:20px;height:1px;background:#d0d0d0"></div>
<div class="r" style="left:21px;top:197px;width:1237px;height:1px;background:#dedede"></div>
<div class="r" style="left:21px;top:207px;width:1237px;height:1px;background:#dedede"></div>
<div class="r" style="left:21px;top:217px;width:1237px;height:1px;background:#dedede"></div>
<div class="r" style="left:21px;top:227px;width:1237px;height:1px;background:#dedede"></div>
<div class="r" style="left:21px;top:237px;width:1237px;height:1px;background:#dedede"></div>
<div class="r" style="left:21px;top:247px;width:1237px;height:1px;background:#dedede"></div>
<div class="r" style="left:21px;top:257px;width:1237px;height:1px;background:#dedede"></div>
<div class="r" style="left:21px;top:267px;width:1237px;height:1px;background:#dedede"></div>
<div class="r" style="left:21px;top:277px;width:1237px;height:1px;background:#dedede"></div>
<div class="r" style="left:21px;top:287px;width:1237px;height:1px;background:#dedede"></div>
<div class="r" style="left:21px;top:297px;width:1237px;height:1px;background:#dedede"></div>
<div class="r" style="left:21px;top:307px;width:1237px;height:1px;background:#dedede"></div>
<div class="r" style="left:21px;top:317px;width:1237px;height:1px;background:#dedede"></div>
<div class="r" style="left:21px;top:327px;width:1237px;height:1px;background:#dedede"></div>
<div class="r" style="left:21px;top:337px;width:1237px;height:1px;background:#dedede"></div>
<div class="r" style="left:21px;top:347px;width:1237px;height:1px;background:#dedede"></div>
<div class="r" style="left:21px;top:357px;width:1237px;height:1px;background:#dedede"></div>
<div class="r" style="left:21px;top:367px;width:1237px;height:1px;background:#dedede"></div>
<div class="r" style="left:21px;top:377px;width:1237px;height:1px;background:#dedede"></div>
<div class="r" style="left:21px;top:387px;width:1237px;height:1px;background:#dedede"></div>
<div class="r" style="left:21px;top:397px;width:1237px;height:1px;background:#dedede"></div>
<div class="r" style="left:21px;top:407px;width:1237px;height:1px;background:#dedede"></div>
<div class="r" style="left:21px;top:417px;width:1237px;height:1px;background:#dedede"></div>
<div class="r" style="left:21px;top:427px;width:1237px;height:1px;background:#dedede"></div>
<div class="r" style="left:21px;top:437px;width:1237px;height:1px;background:#dedede"></div>
<div class="r" style="left:21px;top:447px;width:1237px;height:1px;background:#dedede"></div>
<div class="r" style="left:21px;top:457px;width:1237px;height:1px;background:#dedede"></div>
<div class="r" style="left:21px;top:467px;width:1237px;height:1px;background:#dedede"></div>
<div class="r" style="left:21px;top:477px;width:1237px;height:1px;background:#dedede"></div>
<div class="r" style="left:21px;top:487px;width:1237px;height:1px;background:#dedede"></div>
<div class="r" style="left:21px;top:497px;width:1237px;height:1px;background:#dedede"></div>
<div class="r" style="left:21px;top:507px;width:1237px;height:1px;background:#dedede"></div>
<div class="r" style="left:21px;top:517px;width:1237px;height:1px;background:#dedede"></div>
<div class="r" style="left:21px;top:527px;width:1237px;height:1px;background:#dedede"></div>
<div class="r" style="left:21px;top:537px;width:1237px;height:1px;background:#dedede"></div>
<div class="r" style="left:21px;top:547px;width:1237px;height:1px;background:#dedede"></div>
<div class="r" style="left:21px;top:557px;width:1237px;height:1px;background:#dedede"></div>
<div class="r" style="left:21px;top:567px;width:1237px;height:1px;background:#dedede"></div>
<div class="r" style="left:21px;top:577px;width:1237px;height:1px;background:#dedede"></div>
<div class="r" style="left:21px;top:587px;width:1237px;height:1px;background:#dedede"></div>
<div class="r" style="left:21px;top:597px;width:1237px;height:1px;background:#dedede"></div>
<div class="r" style="left:21px;top:607px;width:1237px;height:1px;background:#dedede"></div>
<div class="r" style="left:21px;top:617px;width:1237px;height:1px;background:#dedede"></div>
<div class="r" style="left:21px;top:627px;width:1237px;height:1px;background:#dedede"></div>
<div class="r" style="left:21px;top:637px;width:1237px;height:1px;background:#dedede"></div>
<div class="r" style="left:21px;top:647px;width:1237px;height:1px;background:#dedede"></div>
<div class="r" style="left:21px;top:657px;width:1237px;height:1px;background:#dedede"></div>
<div class="r" style="left:21px;top:667px;width:1237px;height:1px;background:#dedede"></div>
<div class="r" style="left:21px;top:677px;width:1237px;height:1px;background:#dedede"></div>
<div class="r" style="left:21px;top:687px;width:1237px;height:1px;background:#dedede"></div>
<div class="r" style="left:21px;top:697px;width:1237px;height:1px;background:#dedede"></div>
<div class="r" style="left:21px;top:707px;width:1237px;height:1px;background:#dedede"></div>
<div class="r" style="left:21px;top:717px;width:1237px;height:1px;background:#dedede"></div>
<div class="r" style="left:21px;top:727px;width:1237px;height:1px;background:#dedede"></div>
<div class="r" style="left:21px;top:737px;width:1237px;height:1px;background:#dedede"></div>
<div class="r" style="left:21px;top:747px;width:1237px;height:1px;background:#dedede"></div>
<div class="r" style="left:21px;top:757px;width:1237px;height:1px;background:#dedede"></div>
<div class="r" style="left:21px;top:767px;width:1237px;height:1px;background:#dedede"></div>
<div class="r" style="left:21px;top:777px;width:1237px;height:1px;background:#dedede"></div>
<div class="r" style="left:21px;top:787px;width:1237px;height:1px;background:#dedede"></div>
<div class="r" style="left:21px;top:797px;width:1237px;height:1px;background:#dedede"></div>
<div class="r" style="left:21px;top:807px;width:1237px;height:1px;background:#dedede"></div>
<div class="r" style="left:21px;top:817px;width:1237px;height:1px;background:#dedede"></div>
<div class="r" style="left:21px;top:827px;width:1237px;height:1px;background:#dedede"></div>
<div class="r" style="left:21px;top:837px;width:1237px;height:1px;background:#dedede"></div>
<div class="r" style="left:21px;top:847px;width:1237px;height:1px;background:#dedede"></div>
<div class="r" style="left:21px;top:857px;width:1237px;height:1px;background:#dedede"></div>
<div class="r" style="left:21px;top:867px;width:1237px;height:1px;background:#dedede"></div>
<div class="r" style="left:21px;top:877px;width:1237px;height:1px;background:#dedede"></div>
<div class="r" style="left:21px;top:887px;width:1237px;height:1px;background:#dedede"></div>
<div class="r" style="left:21px;top:897px;width:1237px;height:1px;background:#dedede"></div>
<div class="r" style="left:21px;top:907px;width:1237px;height:1px;background:#dedede"></div>
<div class="r" style="left:40px;top:188px;width:1px;height:720px;background:#dedede"></div>
<div class="r" style="left:99px;top:188px;width:1px;height:720px;background:#dedede"></div>
<div class="r" style="left:210px;top:188px;width:1px;height:720px;background:#dedede"></div>
<div class="r" style="left:294px;top:188px;width:1px;height:720px;background:#dedede"></div>
<div class="r" style="left:323px;top:188px;width:1px;height:720px;background:#dedede"></div>
<div class="r" style="left:844px;top:188px;width:1px;height:720px;background:#dedede"></div>
<div class="r" style="left:935px;top:188px;width:1px;height:720px;background:#dedede"></div>
<div class="r" style="left:985px;top:188px;width:1px;height:720px;background:#dedede"></div>
<div class="r" style="left:1075px;top:188px;width:1px;height:720px;background:#dedede"></div>
<div class="r" style="left:1164px;top:188px;width:1px;height:720px;background:#dedede"></div>
<div class="r" style="left:1217px;top:188px;width:1px;height:720px;background:#dedede"></div>
<div class="r" style="left:846px;top:188px;width:1px;height:720px;background:#dedede"></div>
<div class="gt" style="left:24px;top:188px;width:146px;height:9px;background:#fff;font-weight:bold;letter-spacing:0.75px;color:#000;-webkit-text-stroke:0.5px #000">Attachment to BIR Form 1601-EQ</div>
<div class="gt" style="left:24px;top:198px;width:596px;height:9px;background:#fff;font-weight:bold;letter-spacing:0.75px;color:#000;-webkit-text-stroke:0.5px #000">QUARTERLY ALPHABETICAL LIST OF PAYEES SUBJECTED TO EXPANDED WITHHOLDING TAX &amp; PAYEES WHOSE INCOME PAYMENTS ARE EXEMPT</div>
<div class="gt" style="left:24px;top:208px;width:176px;height:9px;background:#fff;font-weight:bold;letter-spacing:0.75px;color:#000;-webkit-text-stroke:0.5px #000">FOR THE QUARTER ENDING MARCH, 2021</div>
<div class="gt" style="left:24px;top:238px;width:96px;height:9px;background:#fff;font-weight:bold;letter-spacing:0.75px;color:#000;-webkit-text-stroke:0.5px #000">TIN : 000157363-0000</div>
<div class="gt" style="left:24px;top:248px;width:303px;height:9px;background:#fff;font-weight:bold;letter-spacing:0.75px;color:#000;-webkit-text-stroke:0.5px #000">WITHHOLDING AGENT'S NAME: EXCELLENT PERFORMANCE SERVICES INC</div>
<div class="gt" style="left:23px;width:17px;top:288px;height:9px;font-weight:bold;-webkit-text-stroke:0.5px #000;letter-spacing:0.75px;color:#000;">S</div>
<div class="gt" style="left:23px;width:17px;top:298px;height:9px;font-weight:bold;-webkit-text-stroke:0.5px #000;letter-spacing:0.75px;color:#000;">NO</div>
<div class="gt" style="left:43px;width:56px;top:288px;height:9px;font-weight:bold;-webkit-text-stroke:0.5px #000;letter-spacing:0.75px;color:#000;">TAXPAYER</div>
<div class="gt" style="left:43px;width:56px;top:298px;height:9px;font-weight:bold;-webkit-text-stroke:0.5px #000;letter-spacing:0.75px;color:#000;">IDENTIFICATION</div>
<div class="gt" style="left:43px;width:56px;top:308px;height:9px;font-weight:bold;-webkit-text-stroke:0.5px #000;letter-spacing:0.75px;color:#000;">NUMBER</div>
<div class="gt" style="left:102px;width:108px;top:288px;height:9px;font-weight:bold;-webkit-text-stroke:0.5px #000;letter-spacing:0.75px;color:#000;">CORPORATION</div>
<div class="gt" style="left:102px;width:108px;top:298px;height:9px;font-weight:bold;-webkit-text-stroke:0.5px #000;letter-spacing:0.75px;color:#000;">(Registered Name)</div>
<div class="gt" style="left:213px;width:81px;top:288px;height:9px;font-weight:bold;-webkit-text-stroke:0.5px #000;letter-spacing:0.75px;color:#000;">INDIVIDUAL</div>
<div class="gt" style="left:297px;width:26px;top:288px;height:9px;font-weight:bold;-webkit-text-stroke:0.5px #000;letter-spacing:0.75px;color:#000;">ATC</div>
<div class="gt" style="left:326px;width:518px;top:288px;height:9px;font-weight:bold;-webkit-text-stroke:0.5px #000;letter-spacing:0.75px;color:#000;">NATURE OF PAYMENT</div>
<div class="gt" style="left:853px;width:82px;top:288px;height:9px;font-weight:bold;-webkit-text-stroke:0.5px #000;letter-spacing:0.75px;color:#000;">AMOUNT OF</div>
<div class="gt" style="left:853px;width:82px;top:298px;height:9px;font-weight:bold;-webkit-text-stroke:0.5px #000;letter-spacing:0.75px;color:#000;">INCOME PAYMENT</div>
<div class="gt" style="left:942px;width:43px;top:288px;height:9px;font-weight:bold;-webkit-text-stroke:0.5px #000;letter-spacing:0.75px;color:#000;">TAX RATE</div>
<div class="gt" style="left:992px;width:83px;top:288px;height:9px;font-weight:bold;-webkit-text-stroke:0.5px #000;letter-spacing:0.75px;color:#000;">AMOUNT OF</div>
<div class="gt" style="left:992px;width:83px;top:298px;height:9px;font-weight:bold;-webkit-text-stroke:0.5px #000;letter-spacing:0.75px;color:#000;">TAX WITHHELD</div>
<div class="gt" style="left:1082px;width:82px;top:288px;height:9px;font-weight:bold;-webkit-text-stroke:0.5px #000;letter-spacing:0.75px;color:#000;">AMOUNT OF</div>
<div class="gt" style="left:1082px;width:82px;top:298px;height:9px;font-weight:bold;-webkit-text-stroke:0.5px #000;letter-spacing:0.75px;color:#000;">INCOME PAYMENT</div>
<div class="gt" style="left:1171px;width:46px;top:288px;height:9px;font-weight:bold;-webkit-text-stroke:0.5px #000;letter-spacing:0.75px;color:#000;">TAX RATE</div>
<div class="gt" style="left:1224px;width:34px;top:288px;height:9px;font-weight:bold;-webkit-text-stroke:0.5px #000;letter-spacing:0.75px;color:#000;">AMOUNT OF</div>
<div class="gt" style="left:1224px;width:34px;top:298px;height:9px;font-weight:bold;-webkit-text-stroke:0.5px #000;letter-spacing:0.75px;color:#000;">TAX WITHHELD</div>
<div class="gt" style="left:213px;top:298px;width:175px;height:9px;background:#fff;font-weight:bold;letter-spacing:0.75px;color:#000;-webkit-text-stroke:0.5px #000">(Last Name, First Name, Middle Name)</div>
<div class="gt" style="left:853px;top:278px;width:135px;height:9px;background:#fff;font-weight:bold;letter-spacing:0.75px;color:#000;-webkit-text-stroke:0.5px #000">2ND MONTH OF THE QUARTER</div>
<div class="gt" style="left:1082px;top:278px;width:135px;height:9px;background:#fff;font-weight:bold;letter-spacing:0.75px;color:#000;-webkit-text-stroke:0.5px #000">3RD MONTH OF THE QUARTER</div>
<div class="r" style="left:30px;top:288px;width:10px;height:10px;background:#eef0f3;border:1px solid #b8bcc4;box-sizing:border-box"></div>
<svg class="s" style="left:33px;top:292px" width="4" height="2"><path d="M0 0h4L2 2z" fill="#666"/></svg>
<div class="r" style="left:89px;top:288px;width:10px;height:10px;background:#eef0f3;border:1px solid #b8bcc4;box-sizing:border-box"></div>
<svg class="s" style="left:92px;top:292px" width="4" height="2"><path d="M0 0h4L2 2z" fill="#666"/></svg>
<div class="r" style="left:200px;top:288px;width:10px;height:10px;background:#eef0f3;border:1px solid #b8bcc4;box-sizing:border-box"></div>
<svg class="s" style="left:203px;top:292px" width="4" height="2"><path d="M0 0h4L2 2z" fill="#666"/></svg>
<div class="r" style="left:284px;top:288px;width:10px;height:10px;background:#eef0f3;border:1px solid #b8bcc4;box-sizing:border-box"></div>
<svg class="s" style="left:287px;top:292px" width="4" height="2"><path d="M0 0h4L2 2z" fill="#666"/></svg>
<div class="r" style="left:313px;top:288px;width:10px;height:10px;background:#eef0f3;border:1px solid #b8bcc4;box-sizing:border-box"></div>
<svg class="s" style="left:316px;top:292px" width="4" height="2"><path d="M0 0h4L2 2z" fill="#666"/></svg>
<div class="r" style="left:834px;top:288px;width:10px;height:10px;background:#eef0f3;border:1px solid #b8bcc4;box-sizing:border-box"></div>
<svg class="s" style="left:837px;top:292px" width="4" height="2"><path d="M0 0h4L2 2z" fill="#666"/></svg>
<div class="r" style="left:925px;top:288px;width:10px;height:10px;background:#eef0f3;border:1px solid #b8bcc4;box-sizing:border-box"></div>
<svg class="s" style="left:928px;top:292px" width="4" height="2"><path d="M0 0h4L2 2z" fill="#666"/></svg>
<div class="r" style="left:975px;top:288px;width:10px;height:10px;background:#eef0f3;border:1px solid #b8bcc4;box-sizing:border-box"></div>
<svg class="s" style="left:978px;top:292px" width="4" height="2"><path d="M0 0h4L2 2z" fill="#666"/></svg>
<div class="r" style="left:1065px;top:288px;width:10px;height:10px;background:#eef0f3;border:1px solid #b8bcc4;box-sizing:border-box"></div>
<svg class="s" style="left:1068px;top:292px" width="4" height="2"><path d="M0 0h4L2 2z" fill="#666"/></svg>
<div class="r" style="left:1154px;top:288px;width:10px;height:10px;background:#eef0f3;border:1px solid #b8bcc4;box-sizing:border-box"></div>
<svg class="s" style="left:1157px;top:292px" width="4" height="2"><path d="M0 0h4L2 2z" fill="#666"/></svg>
<div class="r" style="left:1207px;top:288px;width:10px;height:10px;background:#eef0f3;border:1px solid #b8bcc4;box-sizing:border-box"></div>
<svg class="s" style="left:1210px;top:292px" width="4" height="2"><path d="M0 0h4L2 2z" fill="#666"/></svg>
<div class="gt" style="left:23px;width:17px;top:318px;height:9px;font-weight:bold;-webkit-text-stroke:0.5px #000;letter-spacing:0.75px;color:#000;">(1)</div>
<svg class="s" style="left:21px;top:318px" width="4" height="4"><path d="M0 0h4L0 4z" fill="#1f9d55"/></svg>
<div class="gt" style="left:43px;width:56px;top:318px;height:9px;font-weight:bold;-webkit-text-stroke:0.5px #000;letter-spacing:0.75px;color:#000;">(2)</div>
<svg class="s" style="left:41px;top:318px" width="4" height="4"><path d="M0 0h4L0 4z" fill="#1f9d55"/></svg>
<div class="gt" style="left:102px;width:108px;top:318px;height:9px;font-weight:bold;-webkit-text-stroke:0.5px #000;letter-spacing:0.75px;color:#000;">(3)</div>
<svg class="s" style="left:100px;top:318px" width="4" height="4"><path d="M0 0h4L0 4z" fill="#1f9d55"/></svg>
<div class="gt" style="left:213px;width:81px;top:318px;height:9px;font-weight:bold;-webkit-text-stroke:0.5px #000;letter-spacing:0.75px;color:#000;">(4)</div>
<svg class="s" style="left:211px;top:318px" width="4" height="4"><path d="M0 0h4L0 4z" fill="#1f9d55"/></svg>
<div class="gt" style="left:297px;width:26px;top:318px;height:9px;font-weight:bold;-webkit-text-stroke:0.5px #000;letter-spacing:0.75px;color:#000;">(5)</div>
<svg class="s" style="left:295px;top:318px" width="4" height="4"><path d="M0 0h4L0 4z" fill="#1f9d55"/></svg>
<div class="gt" style="left:853px;width:82px;top:318px;height:9px;font-weight:bold;-webkit-text-stroke:0.5px #000;letter-spacing:0.75px;color:#000;">(9)</div>
<svg class="s" style="left:847px;top:318px" width="4" height="4"><path d="M0 0h4L0 4z" fill="#1f9d55"/></svg>
<div class="gt" style="left:942px;width:43px;top:318px;height:9px;font-weight:bold;-webkit-text-stroke:0.5px #000;letter-spacing:0.75px;color:#000;">(10)</div>
<svg class="s" style="left:936px;top:318px" width="4" height="4"><path d="M0 0h4L0 4z" fill="#1f9d55"/></svg>
<div class="gt" style="left:992px;width:83px;top:318px;height:9px;font-weight:bold;-webkit-text-stroke:0.5px #000;letter-spacing:0.75px;color:#000;">(11)</div>
<svg class="s" style="left:986px;top:318px" width="4" height="4"><path d="M0 0h4L0 4z" fill="#1f9d55"/></svg>
<div class="gt" style="left:1082px;width:82px;top:318px;height:9px;font-weight:bold;-webkit-text-stroke:0.5px #000;letter-spacing:0.75px;color:#000;">(12)</div>
<svg class="s" style="left:1076px;top:318px" width="4" height="4"><path d="M0 0h4L0 4z" fill="#1f9d55"/></svg>
<div class="gt" style="left:1171px;width:46px;top:318px;height:9px;font-weight:bold;-webkit-text-stroke:0.5px #000;letter-spacing:0.75px;color:#000;">(13)</div>
<svg class="s" style="left:1165px;top:318px" width="4" height="4"><path d="M0 0h4L0 4z" fill="#1f9d55"/></svg>
<div class="gt" style="left:1224px;width:34px;top:318px;height:9px;font-weight:bold;-webkit-text-stroke:0.5px #000;letter-spacing:0.75px;color:#000;">(14)</div>
<svg class="s" style="left:1218px;top:318px" width="4" height="4"><path d="M0 0h4L0 4z" fill="#1f9d55"/></svg>
<div class="r" style="left:23px;top:331px;width:16px;height:1px;background:repeating-linear-gradient(90deg,#3a3a3a 0 2px,transparent 2px 3px)"></div>
<div class="r" style="left:23px;top:333px;width:16px;height:1px;background:repeating-linear-gradient(90deg,#3a3a3a 0 2px,transparent 2px 3px)"></div>
<div class="r" style="left:43px;top:331px;width:55px;height:1px;background:repeating-linear-gradient(90deg,#3a3a3a 0 2px,transparent 2px 3px)"></div>
<div class="r" style="left:43px;top:333px;width:55px;height:1px;background:repeating-linear-gradient(90deg,#3a3a3a 0 2px,transparent 2px 3px)"></div>
<div class="r" style="left:102px;top:331px;width:107px;height:1px;background:repeating-linear-gradient(90deg,#3a3a3a 0 2px,transparent 2px 3px)"></div>
<div class="r" style="left:102px;top:333px;width:107px;height:1px;background:repeating-linear-gradient(90deg,#3a3a3a 0 2px,transparent 2px 3px)"></div>
<div class="r" style="left:213px;top:331px;width:80px;height:1px;background:repeating-linear-gradient(90deg,#3a3a3a 0 2px,transparent 2px 3px)"></div>
<div class="r" style="left:213px;top:333px;width:80px;height:1px;background:repeating-linear-gradient(90deg,#3a3a3a 0 2px,transparent 2px 3px)"></div>
<div class="r" style="left:297px;top:331px;width:25px;height:1px;background:repeating-linear-gradient(90deg,#3a3a3a 0 2px,transparent 2px 3px)"></div>
<div class="r" style="left:297px;top:333px;width:25px;height:1px;background:repeating-linear-gradient(90deg,#3a3a3a 0 2px,transparent 2px 3px)"></div>
<div class="r" style="left:326px;top:331px;width:122px;height:1px;background:repeating-linear-gradient(90deg,#3a3a3a 0 2px,transparent 2px 3px)"></div>
<div class="r" style="left:326px;top:333px;width:122px;height:1px;background:repeating-linear-gradient(90deg,#3a3a3a 0 2px,transparent 2px 3px)"></div>
<div class="r" style="left:849px;top:331px;width:85px;height:1px;background:repeating-linear-gradient(90deg,#3a3a3a 0 2px,transparent 2px 3px)"></div>
<div class="r" style="left:849px;top:333px;width:85px;height:1px;background:repeating-linear-gradient(90deg,#3a3a3a 0 2px,transparent 2px 3px)"></div>
<div class="r" style="left:938px;top:331px;width:46px;height:1px;background:repeating-linear-gradient(90deg,#3a3a3a 0 2px,transparent 2px 3px)"></div>
<div class="r" style="left:938px;top:333px;width:46px;height:1px;background:repeating-linear-gradient(90deg,#3a3a3a 0 2px,transparent 2px 3px)"></div>
<div class="r" style="left:988px;top:331px;width:86px;height:1px;background:repeating-linear-gradient(90deg,#3a3a3a 0 2px,transparent 2px 3px)"></div>
<div class="r" style="left:988px;top:333px;width:86px;height:1px;background:repeating-linear-gradient(90deg,#3a3a3a 0 2px,transparent 2px 3px)"></div>
<div class="r" style="left:1078px;top:331px;width:85px;height:1px;background:repeating-linear-gradient(90deg,#3a3a3a 0 2px,transparent 2px 3px)"></div>
<div class="r" style="left:1078px;top:333px;width:85px;height:1px;background:repeating-linear-gradient(90deg,#3a3a3a 0 2px,transparent 2px 3px)"></div>
<div class="r" style="left:1167px;top:331px;width:49px;height:1px;background:repeating-linear-gradient(90deg,#3a3a3a 0 2px,transparent 2px 3px)"></div>
<div class="r" style="left:1167px;top:333px;width:49px;height:1px;background:repeating-linear-gradient(90deg,#3a3a3a 0 2px,transparent 2px 3px)"></div>
<div class="r" style="left:1220px;top:331px;width:37px;height:1px;background:repeating-linear-gradient(90deg,#3a3a3a 0 2px,transparent 2px 3px)"></div>
<div class="r" style="left:1220px;top:333px;width:37px;height:1px;background:repeating-linear-gradient(90deg,#3a3a3a 0 2px,transparent 2px 3px)"></div>
<div class="gt" style="left:21px;width:19px;text-align:right;top:338px;height:9px;-webkit-text-stroke:0.25px #111;">1</div>
<div class="gt" style="left:43px;width:56px;top:338px;height:9px;letter-spacing:0.18px;-webkit-text-stroke:0.25px #111;">210-238-747-000</div>
<div class="gt" style="left:101px;width:109px;top:338px;height:9px;font-size:6.65px;-webkit-text-stroke:0.25px #111;">A C CHEM INDUSTRIAL, INC</div>
<div class="gt" style="left:297px;width:26px;top:338px;height:9px;font-size:6.4px;-webkit-text-stroke:0.25px #111;">WC158</div>
<div class="gt" style="left:326px;width:518px;top:338px;height:9px;letter-spacing:0.113px;">Income payment made by top withholding agents to their local/resident supplier of goods other than those covered by other rates of withholding tax - Corporate</div>
<div class="gt" style="left:21px;width:19px;text-align:right;top:348px;height:9px;-webkit-text-stroke:0.25px #111;">1</div>
<div class="gt" style="left:43px;width:56px;top:348px;height:9px;letter-spacing:0.18px;-webkit-text-stroke:0.25px #111;">210-238-747-000</div>
<div class="gt" style="left:101px;width:109px;top:348px;height:9px;font-size:6.65px;-webkit-text-stroke:0.25px #111;">A C CHEM INDUSTRIAL, INC</div>
<div class="gt" style="left:297px;width:26px;top:348px;height:9px;font-size:6.4px;-webkit-text-stroke:0.25px #111;">WC158</div>
<div class="gt" style="left:326px;width:518px;top:348px;height:9px;letter-spacing:0.113px;">Income payment made by top withholding agents to their local/resident supplier of goods other than those covered by other rates of withholding tax - Corporate</div>
<div class="gt" style="left:21px;width:19px;text-align:right;top:358px;height:9px;-webkit-text-stroke:0.25px #111;">1</div>
<div class="gt" style="left:43px;width:56px;top:358px;height:9px;letter-spacing:0.18px;-webkit-text-stroke:0.25px #111;">210-238-747-000</div>
<div class="gt" style="left:101px;width:109px;top:358px;height:9px;font-size:6.65px;-webkit-text-stroke:0.25px #111;">A C CHEM INDUSTRIAL, INC</div>
<div class="gt" style="left:297px;width:26px;top:358px;height:9px;font-size:6.4px;-webkit-text-stroke:0.25px #111;">WC158</div>
<div class="gt" style="left:326px;width:518px;top:358px;height:9px;letter-spacing:0.113px;">Income payment made by top withholding agents to their local/resident supplier of goods other than those covered by other rates of withholding tax - Corporate</div>
<div class="gt" style="left:21px;width:19px;text-align:right;top:368px;height:9px;-webkit-text-stroke:0.25px #111;">2</div>
<div class="gt" style="left:43px;width:56px;top:368px;height:9px;letter-spacing:0.18px;-webkit-text-stroke:0.25px #111;">162-505-046-000</div>
<div class="gt" style="left:101px;width:109px;top:368px;height:9px;font-size:6.65px;-webkit-text-stroke:0.25px #111;">CHRIS AND COLEEN TRADING</div>
<div class="gt" style="left:297px;width:26px;top:368px;height:9px;font-size:6.4px;-webkit-text-stroke:0.25px #111;">WC158</div>
<div class="gt" style="left:326px;width:518px;top:368px;height:9px;letter-spacing:0.113px;">Income payment made by top withholding agents to their local/resident supplier of goods other than those covered by other rates of withholding tax - Corporate</div>
<div class="gt" style="left:21px;width:19px;text-align:right;top:378px;height:9px;-webkit-text-stroke:0.25px #111;">2</div>
<div class="gt" style="left:43px;width:56px;top:378px;height:9px;letter-spacing:0.18px;-webkit-text-stroke:0.25px #111;">207-209-569-000</div>
<div class="gt" style="left:101px;width:109px;top:378px;height:9px;font-size:6.65px;-webkit-text-stroke:0.25px #111;">CORREAL PROPERTY HOLDINGS, INC</div>
<div class="gt" style="left:297px;width:26px;top:378px;height:9px;font-size:6.4px;-webkit-text-stroke:0.25px #111;">WC100</div>
<div class="gt" style="left:326px;width:518px;top:378px;height:9px;letter-spacing:0.154px;">Rentals - real/personal properties, poles, satellites &amp; transmission facilities, billboards - Corporate</div>
<div class="gt" style="left:21px;width:19px;text-align:right;top:388px;height:9px;-webkit-text-stroke:0.25px #111;">2</div>
<div class="gt" style="left:43px;width:56px;top:388px;height:9px;letter-spacing:0.18px;-webkit-text-stroke:0.25px #111;">162-505-046-000</div>
<div class="gt" style="left:101px;width:109px;top:388px;height:9px;font-size:6.65px;-webkit-text-stroke:0.25px #111;">CHRIS AND COLEEN TRADING</div>
<div class="gt" style="left:297px;width:26px;top:388px;height:9px;font-size:6.4px;-webkit-text-stroke:0.25px #111;">WC158</div>
<div class="gt" style="left:326px;width:518px;top:388px;height:9px;letter-spacing:0.113px;">Income payment made by top withholding agents to their local/resident supplier of goods other than those covered by other rates of withholding tax - Corporate</div>
<div class="gt" style="left:21px;width:19px;text-align:right;top:398px;height:9px;-webkit-text-stroke:0.25px #111;">3</div>
<div class="gt" style="left:43px;width:56px;top:398px;height:9px;letter-spacing:0.18px;-webkit-text-stroke:0.25px #111;">000-435-005-000</div>
<div class="gt" style="left:101px;width:109px;top:398px;height:9px;font-size:6.65px;-webkit-text-stroke:0.25px #111;">COMPETITIVE CARDS SOLUTIONS</div>
<div class="gt" style="left:297px;width:26px;top:398px;height:9px;font-size:6.4px;-webkit-text-stroke:0.25px #111;">WC158</div>
<div class="gt" style="left:326px;width:518px;top:398px;height:9px;letter-spacing:0.113px;">Income payment made by top withholding agents to their local/resident supplier of goods other than those covered by other rates of withholding tax - Corporate</div>
<div class="gt" style="left:21px;width:19px;text-align:right;top:408px;height:9px;-webkit-text-stroke:0.25px #111;">3</div>
<div class="gt" style="left:43px;width:56px;top:408px;height:9px;letter-spacing:0.18px;-webkit-text-stroke:0.25px #111;">200-047-479-000</div>
<div class="gt" style="left:101px;width:109px;top:408px;height:9px;font-size:6.65px;-webkit-text-stroke:0.25px #111;">HWADIA TYRE CORPORATION</div>
<div class="gt" style="left:297px;width:26px;top:408px;height:9px;font-size:6.4px;-webkit-text-stroke:0.25px #111;">WC158</div>
<div class="gt" style="left:326px;width:518px;top:408px;height:9px;letter-spacing:0.113px;">Income payment made by top withholding agents to their local/resident supplier of goods other than those covered by other rates of withholding tax - Corporate</div>
<div class="gt" style="left:21px;width:19px;text-align:right;top:418px;height:9px;-webkit-text-stroke:0.25px #111;">3</div>
<div class="gt" style="left:43px;width:56px;top:418px;height:9px;letter-spacing:0.18px;-webkit-text-stroke:0.25px #111;">207-209-569-000</div>
<div class="gt" style="left:101px;width:109px;top:418px;height:9px;font-size:6.65px;-webkit-text-stroke:0.25px #111;">CORREAL PROPERTY HOLDINGS, INC</div>
<div class="gt" style="left:297px;width:26px;top:418px;height:9px;font-size:6.4px;-webkit-text-stroke:0.25px #111;">WC100</div>
<div class="gt" style="left:326px;width:518px;top:418px;height:9px;letter-spacing:0.154px;">Rentals - real/personal properties, poles, satellites &amp; transmission facilities, billboards - Corporate</div>
<div class="gt" style="left:21px;width:19px;text-align:right;top:428px;height:9px;-webkit-text-stroke:0.25px #111;">4</div>
<div class="gt" style="left:43px;width:56px;top:428px;height:9px;letter-spacing:0.18px;-webkit-text-stroke:0.25px #111;">207-209-569-000</div>
<div class="gt" style="left:101px;width:109px;top:428px;height:9px;font-size:6.65px;-webkit-text-stroke:0.25px #111;">CORREAL PROPERTY HOLDINGS, INC</div>
<div class="gt" style="left:297px;width:26px;top:428px;height:9px;font-size:6.4px;-webkit-text-stroke:0.25px #111;">WC100</div>
<div class="gt" style="left:326px;width:518px;top:428px;height:9px;letter-spacing:0.154px;">Rentals - real/personal properties, poles, satellites &amp; transmission facilities, billboards - Corporate</div>
<div class="gt" style="left:21px;width:19px;text-align:right;top:438px;height:9px;-webkit-text-stroke:0.25px #111;">4</div>
<div class="gt" style="left:43px;width:56px;top:438px;height:9px;letter-spacing:0.18px;-webkit-text-stroke:0.25px #111;">113-405-093-0000</div>
<div class="gt" style="left:213px;width:81px;top:438px;height:9px;font-size:6.65px;-webkit-text-stroke:0.25px #111;">MENEDEZ, ENRIQUE</div>
<div class="gt" style="left:297px;width:26px;top:438px;height:9px;font-size:6.4px;-webkit-text-stroke:0.25px #111;">WC100</div>
<div class="gt" style="left:326px;width:518px;top:438px;height:9px;letter-spacing:0.154px;">Rentals - real/personal properties, poles, satellites &amp; transmission facilities, billboards - Corporate</div>
<div class="gt" style="left:21px;width:19px;text-align:right;top:448px;height:9px;-webkit-text-stroke:0.25px #111;">4</div>
<div class="gt" style="left:43px;width:56px;top:448px;height:9px;letter-spacing:0.18px;-webkit-text-stroke:0.25px #111;">113-405-093-0000</div>
<div class="gt" style="left:213px;width:81px;top:448px;height:9px;font-size:6.65px;-webkit-text-stroke:0.25px #111;">MENEDEZ, ENRIQUE</div>
<div class="gt" style="left:297px;width:26px;top:448px;height:9px;font-size:6.4px;-webkit-text-stroke:0.25px #111;">WC100</div>
<div class="gt" style="left:326px;width:518px;top:448px;height:9px;letter-spacing:0.154px;">Rentals - real/personal properties, poles, satellites &amp; transmission facilities, billboards - Corporate</div>
<div class="gt" style="left:21px;width:19px;text-align:right;top:458px;height:9px;-webkit-text-stroke:0.25px #111;">5</div>
<div class="gt" style="left:43px;width:56px;top:458px;height:9px;letter-spacing:0.18px;-webkit-text-stroke:0.25px #111;">000-454-190-000</div>
<div class="gt" style="left:101px;width:109px;top:458px;height:9px;font-size:6.65px;-webkit-text-stroke:0.25px #111;">INTEGRATED MANAGEMENT SERVICES</div>
<div class="gt" style="left:297px;width:26px;top:458px;height:9px;font-size:6.4px;-webkit-text-stroke:0.25px #111;">WC160</div>
<div class="gt" style="left:326px;width:518px;top:458px;height:9px;letter-spacing:0.113px;">Income payment made by top withholding agents to their local/resident supplier of services other than those covered by other rates of withholding tax - Corporate</div>
<div class="gt" style="left:21px;width:19px;text-align:right;top:468px;height:9px;-webkit-text-stroke:0.25px #111;">5</div>
<div class="gt" style="left:43px;width:56px;top:468px;height:9px;letter-spacing:0.18px;-webkit-text-stroke:0.25px #111;">113-405-093-0000</div>
<div class="gt" style="left:213px;width:81px;top:468px;height:9px;font-size:6.65px;-webkit-text-stroke:0.25px #111;">MENEDEZ, ENRIQUE</div>
<div class="gt" style="left:297px;width:26px;top:468px;height:9px;font-size:6.4px;-webkit-text-stroke:0.25px #111;">WC100</div>
<div class="gt" style="left:326px;width:518px;top:468px;height:9px;letter-spacing:0.154px;">Rentals - real/personal properties, poles, satellites &amp; transmission facilities, billboards - Corporate</div>
<div class="gt" style="left:21px;width:19px;text-align:right;top:478px;height:9px;-webkit-text-stroke:0.25px #111;">5</div>
<div class="gt" style="left:43px;width:56px;top:478px;height:9px;letter-spacing:0.18px;-webkit-text-stroke:0.25px #111;">000-454-190-000</div>
<div class="gt" style="left:101px;width:109px;top:478px;height:9px;font-size:6.65px;-webkit-text-stroke:0.25px #111;">INTEGRATED MANAGEMENT SERVICES</div>
<div class="gt" style="left:297px;width:26px;top:478px;height:9px;font-size:6.4px;-webkit-text-stroke:0.25px #111;">WC160</div>
<div class="gt" style="left:326px;width:518px;top:478px;height:9px;letter-spacing:0.113px;">Income payment made by top withholding agents to their local/resident supplier of services other than those covered by other rates of withholding tax - Corporate</div>
<div class="gt" style="left:21px;width:19px;text-align:right;top:488px;height:9px;-webkit-text-stroke:0.25px #111;">6</div>
<div class="gt" style="left:43px;width:56px;top:488px;height:9px;letter-spacing:0.18px;-webkit-text-stroke:0.25px #111;">200-244-112-000</div>
<div class="gt" style="left:101px;width:109px;top:488px;height:9px;font-size:6.65px;-webkit-text-stroke:0.25px #111;">J TANCIO ENTERPRISES, INC</div>
<div class="gt" style="left:297px;width:26px;top:488px;height:9px;font-size:6.4px;-webkit-text-stroke:0.25px #111;">WC158</div>
<div class="gt" style="left:326px;width:518px;top:488px;height:9px;letter-spacing:0.113px;">Income payment made by top withholding agents to their local/resident supplier of goods other than those covered by other rates of withholding tax - Corporate</div>
<div class="gt" style="left:21px;width:19px;text-align:right;top:498px;height:9px;-webkit-text-stroke:0.25px #111;">6</div>
<div class="gt" style="left:43px;width:56px;top:498px;height:9px;letter-spacing:0.18px;-webkit-text-stroke:0.25px #111;">418-248-242-000</div>
<div class="gt" style="left:101px;width:109px;top:498px;height:9px;font-size:6.65px;-webkit-text-stroke:0.25px #111;">KIICHI ABE</div>
<div class="gt" style="left:297px;width:26px;top:498px;height:9px;font-size:6.4px;-webkit-text-stroke:0.25px #111;">WI010</div>
<div class="gt" style="left:326px;width:518px;top:498px;height:9px;letter-spacing:0.061px;">Professionals (Lawyers, CPAs, Engineers, etc.) - If gross income for the current year did not exceed P3M</div>
<div class="gt" style="left:21px;width:19px;text-align:right;top:508px;height:9px;-webkit-text-stroke:0.25px #111;">6</div>
<div class="gt" style="left:43px;width:56px;top:508px;height:9px;letter-spacing:0.18px;-webkit-text-stroke:0.25px #111;">206-045-459-000</div>
<div class="gt" style="left:213px;width:81px;top:508px;height:9px;font-size:6.65px;-webkit-text-stroke:0.25px #111;">INDEFENZO, JOSEPH</div>
<div class="gt" style="left:297px;width:26px;top:508px;height:9px;font-size:6.4px;-webkit-text-stroke:0.25px #111;">WI010</div>
<div class="gt" style="left:326px;width:518px;top:508px;height:9px;letter-spacing:0.061px;">Professionals (Lawyers, CPAs, Engineers, etc.) - If gross income for the current year did not exceed P3M</div>
<div class="gt" style="left:21px;width:19px;text-align:right;top:518px;height:9px;-webkit-text-stroke:0.25px #111;">7</div>
<div class="gt" style="left:43px;width:56px;top:518px;height:9px;letter-spacing:0.18px;-webkit-text-stroke:0.25px #111;">000-454-190-000</div>
<div class="gt" style="left:101px;width:109px;top:518px;height:9px;font-size:6.65px;-webkit-text-stroke:0.25px #111;">INTEGRATED MANAGEMENT SERVICES</div>
<div class="gt" style="left:297px;width:26px;top:518px;height:9px;font-size:6.4px;-webkit-text-stroke:0.25px #111;">WC160</div>
<div class="gt" style="left:326px;width:518px;top:518px;height:9px;letter-spacing:0.113px;">Income payment made by top withholding agents to their local/resident supplier of services other than those covered by other rates of withholding tax - Corporate</div>
<div class="gt" style="left:21px;width:19px;text-align:right;top:528px;height:9px;-webkit-text-stroke:0.25px #111;">7</div>
<div class="gt" style="left:43px;width:56px;top:528px;height:9px;letter-spacing:0.18px;-webkit-text-stroke:0.25px #111;">418-248-242-000</div>
<div class="gt" style="left:101px;width:109px;top:528px;height:9px;font-size:6.65px;-webkit-text-stroke:0.25px #111;">KIICHI ABE</div>
<div class="gt" style="left:297px;width:26px;top:528px;height:9px;font-size:6.4px;-webkit-text-stroke:0.25px #111;">WI010</div>
<div class="gt" style="left:326px;width:518px;top:528px;height:9px;letter-spacing:0.061px;">Professionals (Lawyers, CPAs, Engineers, etc.) - If gross income for the current year did not exceed P3M</div>
<div class="gt" style="left:21px;width:19px;text-align:right;top:538px;height:9px;-webkit-text-stroke:0.25px #111;">7</div>
<div class="gt" style="left:43px;width:56px;top:538px;height:9px;letter-spacing:0.18px;-webkit-text-stroke:0.25px #111;">287-494-541-000</div>
<div class="gt" style="left:101px;width:109px;top:538px;height:9px;font-size:6.65px;-webkit-text-stroke:0.25px #111;">MARC OVEN TRADING</div>
<div class="gt" style="left:297px;width:26px;top:538px;height:9px;font-size:6.4px;-webkit-text-stroke:0.25px #111;">WC158</div>
<div class="gt" style="left:326px;width:518px;top:538px;height:9px;letter-spacing:0.113px;">Income payment made by top withholding agents to their local/resident supplier of goods other than those covered by other rates of withholding tax - Corporate</div>
<div class="gt" style="left:21px;width:19px;text-align:right;top:548px;height:9px;-webkit-text-stroke:0.25px #111;">8</div>
<div class="gt" style="left:43px;width:56px;top:548px;height:9px;letter-spacing:0.18px;-webkit-text-stroke:0.25px #111;">200-244-112-000</div>
<div class="gt" style="left:101px;width:109px;top:548px;height:9px;font-size:6.65px;-webkit-text-stroke:0.25px #111;">J TANCIO ENTERPRISES, INC</div>
<div class="gt" style="left:297px;width:26px;top:548px;height:9px;font-size:6.4px;-webkit-text-stroke:0.25px #111;">WC158</div>
<div class="gt" style="left:326px;width:518px;top:548px;height:9px;letter-spacing:0.113px;">Income payment made by top withholding agents to their local/resident supplier of goods other than those covered by other rates of withholding tax - Corporate</div>
<div class="gt" style="left:21px;width:19px;text-align:right;top:558px;height:9px;-webkit-text-stroke:0.25px #111;">8</div>
<div class="gt" style="left:43px;width:56px;top:558px;height:9px;letter-spacing:0.18px;-webkit-text-stroke:0.25px #111;">287-494-541-000</div>
<div class="gt" style="left:101px;width:109px;top:558px;height:9px;font-size:6.65px;-webkit-text-stroke:0.25px #111;">MARC OVEN TRADING</div>
<div class="gt" style="left:297px;width:26px;top:558px;height:9px;font-size:6.4px;-webkit-text-stroke:0.25px #111;">WC158</div>
<div class="gt" style="left:326px;width:518px;top:558px;height:9px;letter-spacing:0.113px;">Income payment made by top withholding agents to their local/resident supplier of goods other than those covered by other rates of withholding tax - Corporate</div>
<div class="gt" style="left:21px;width:19px;text-align:right;top:568px;height:9px;-webkit-text-stroke:0.25px #111;">8</div>
<div class="gt" style="left:43px;width:56px;top:568px;height:9px;letter-spacing:0.18px;-webkit-text-stroke:0.25px #111;">000-006-513-000</div>
<div class="gt" style="left:101px;width:109px;top:568px;height:9px;font-size:6.65px;-webkit-text-stroke:0.25px #111;">PHILCARE</div>
<div class="gt" style="left:297px;width:26px;top:568px;height:9px;font-size:6.4px;-webkit-text-stroke:0.25px #111;">WC160</div>
<div class="gt" style="left:326px;width:518px;top:568px;height:9px;letter-spacing:0.113px;">Income payment made by top withholding agents to their local/resident supplier of services other than those covered by other rates of withholding tax - Corporate</div>
<div class="gt" style="left:21px;width:19px;text-align:right;top:578px;height:9px;-webkit-text-stroke:0.25px #111;">9</div>
<div class="gt" style="left:43px;width:56px;top:578px;height:9px;letter-spacing:0.18px;-webkit-text-stroke:0.25px #111;">418-248-242-000</div>
<div class="gt" style="left:101px;width:109px;top:578px;height:9px;font-size:6.65px;-webkit-text-stroke:0.25px #111;">KIICHI ABE</div>
<div class="gt" style="left:297px;width:26px;top:578px;height:9px;font-size:6.4px;-webkit-text-stroke:0.25px #111;">WI010</div>
<div class="gt" style="left:326px;width:518px;top:578px;height:9px;letter-spacing:0.061px;">Professionals (Lawyers, CPAs, Engineers, etc.) - If gross income for the current year did not exceed P3M</div>
<div class="gt" style="left:43px;top:588px;width:70px;height:9px;background:#fff;letter-spacing:0.18px;-webkit-text-stroke:0.25px #111;">403-496-552-0000</div>
<div class="gt" style="left:213px;width:81px;top:588px;height:9px;font-size:6.65px;-webkit-text-stroke:0.25px #111;">SANGU, KOJI</div>
<div class="gt" style="left:297px;width:26px;top:588px;height:9px;font-size:6.4px;-webkit-text-stroke:0.25px #111;">WI040</div>
<div class="gt" style="left:326px;width:518px;top:588px;height:9px;letter-spacing:0.054px;">Fees of directors who are not employees of the company - If gross income for the current year did not exceed P3M</div>
<div class="gt" style="left:21px;width:19px;text-align:right;top:598px;height:9px;-webkit-text-stroke:0.25px #111;">9</div>
<div class="gt" style="left:43px;width:56px;top:598px;height:9px;letter-spacing:0.18px;-webkit-text-stroke:0.25px #111;">208-390-419-000</div>
<div class="gt" style="left:213px;width:81px;top:598px;height:9px;font-size:6.65px;-webkit-text-stroke:0.25px #111;">QUINTOS, JANKAYRAND</div>
<div class="gt" style="left:297px;width:26px;top:598px;height:9px;font-size:6.4px;-webkit-text-stroke:0.25px #111;">WI040</div>
<div class="gt" style="left:326px;width:518px;top:598px;height:9px;letter-spacing:0.054px;">Fees of directors who are not employees of the company - If gross income for the current year did not exceed P3M</div>
<div class="gt" style="left:21px;width:19px;text-align:right;top:608px;height:9px;-webkit-text-stroke:0.25px #111;">9</div>
<div class="gt" style="left:43px;width:56px;top:608px;height:9px;letter-spacing:0.18px;-webkit-text-stroke:0.25px #111;">208-390-419-000</div>
<div class="gt" style="left:213px;width:81px;top:608px;height:9px;font-size:6.65px;-webkit-text-stroke:0.25px #111;">QUINTOS, JANKAYRAND</div>
<div class="gt" style="left:297px;width:26px;top:608px;height:9px;font-size:6.4px;-webkit-text-stroke:0.25px #111;">WI040</div>
<div class="gt" style="left:326px;width:518px;top:608px;height:9px;letter-spacing:0.054px;">Fees of directors who are not employees of the company - If gross income for the current year did not exceed P3M</div>
<div class="gt" style="left:21px;width:19px;text-align:right;top:618px;height:9px;-webkit-text-stroke:0.25px #111;">10</div>
<div class="gt" style="left:43px;width:56px;top:618px;height:9px;letter-spacing:0.18px;-webkit-text-stroke:0.25px #111;">287-494-541-000</div>
<div class="gt" style="left:101px;width:109px;top:618px;height:9px;font-size:6.65px;-webkit-text-stroke:0.25px #111;">MARC OVEN TRADING</div>
<div class="gt" style="left:297px;width:26px;top:618px;height:9px;font-size:6.4px;-webkit-text-stroke:0.25px #111;">WC158</div>
<div class="gt" style="left:326px;width:518px;top:618px;height:9px;letter-spacing:0.113px;">Income payment made by top withholding agents to their local/resident supplier of goods other than those covered by other rates of withholding tax - Corporate</div>
<div class="gt" style="left:21px;width:19px;text-align:right;top:628px;height:9px;-webkit-text-stroke:0.25px #111;">7</div>
<div class="gt" style="left:43px;width:56px;top:628px;height:9px;letter-spacing:0.18px;-webkit-text-stroke:0.25px #111;">000-454-190-000</div>
<div class="gt" style="left:101px;width:109px;top:628px;height:9px;font-size:6.65px;-webkit-text-stroke:0.25px #111;">INTEGRATED MANAGEMENT SERVICES</div>
<div class="gt" style="left:297px;width:26px;top:628px;height:9px;font-size:6.4px;-webkit-text-stroke:0.25px #111;">WC160</div>
<div class="gt" style="left:326px;width:518px;top:628px;height:9px;letter-spacing:0.113px;">Income payment made by top withholding agents to their local/resident supplier of services other than those covered by other rates of withholding tax - Corporate</div>
<div class="gt" style="left:21px;width:19px;text-align:right;top:638px;height:9px;-webkit-text-stroke:0.25px #111;">7</div>
<div class="gt" style="left:43px;width:56px;top:638px;height:9px;letter-spacing:0.18px;-webkit-text-stroke:0.25px #111;">418-248-242-000</div>
<div class="gt" style="left:101px;width:109px;top:638px;height:9px;font-size:6.65px;-webkit-text-stroke:0.25px #111;">KIICHI ABE</div>
<div class="gt" style="left:297px;width:26px;top:638px;height:9px;font-size:6.4px;-webkit-text-stroke:0.25px #111;">WI010</div>
<div class="gt" style="left:326px;width:518px;top:638px;height:9px;letter-spacing:0.061px;">Professionals (Lawyers, CPAs, Engineers, etc.) - If gross income for the current year did not exceed P3M</div>
<div class="gt" style="left:21px;width:19px;text-align:right;top:648px;height:9px;-webkit-text-stroke:0.25px #111;">7</div>
<div class="gt" style="left:43px;width:56px;top:648px;height:9px;letter-spacing:0.18px;-webkit-text-stroke:0.25px #111;">287-494-541-000</div>
<div class="gt" style="left:101px;width:109px;top:648px;height:9px;font-size:6.65px;-webkit-text-stroke:0.25px #111;">MARC OVEN TRADING</div>
<div class="gt" style="left:297px;width:26px;top:648px;height:9px;font-size:6.4px;-webkit-text-stroke:0.25px #111;">WC158</div>
<div class="gt" style="left:326px;width:518px;top:648px;height:9px;letter-spacing:0.113px;">Income payment made by top withholding agents to their local/resident supplier of goods other than those covered by other rates of withholding tax - Corporate</div>
<div class="gt" style="left:21px;width:19px;text-align:right;top:658px;height:9px;-webkit-text-stroke:0.25px #111;">8</div>
<div class="gt" style="left:43px;width:56px;top:658px;height:9px;letter-spacing:0.18px;-webkit-text-stroke:0.25px #111;">200-244-112-000</div>
<div class="gt" style="left:101px;width:109px;top:658px;height:9px;font-size:6.65px;-webkit-text-stroke:0.25px #111;">J TANCIO ENTERPRISES, INC</div>
<div class="gt" style="left:297px;width:26px;top:658px;height:9px;font-size:6.4px;-webkit-text-stroke:0.25px #111;">WC158</div>
<div class="gt" style="left:326px;width:518px;top:658px;height:9px;letter-spacing:0.113px;">Income payment made by top withholding agents to their local/resident supplier of goods other than those covered by other rates of withholding tax - Corporate</div>
<div class="gt" style="left:21px;width:19px;text-align:right;top:668px;height:9px;-webkit-text-stroke:0.25px #111;">8</div>
<div class="gt" style="left:43px;width:56px;top:668px;height:9px;letter-spacing:0.18px;-webkit-text-stroke:0.25px #111;">287-494-541-000</div>
<div class="gt" style="left:101px;width:109px;top:668px;height:9px;font-size:6.65px;-webkit-text-stroke:0.25px #111;">MARC OVEN TRADING</div>
<div class="gt" style="left:297px;width:26px;top:668px;height:9px;font-size:6.4px;-webkit-text-stroke:0.25px #111;">WC158</div>
<div class="gt" style="left:326px;width:518px;top:668px;height:9px;letter-spacing:0.113px;">Income payment made by top withholding agents to their local/resident supplier of goods other than those covered by other rates of withholding tax - Corporate</div>
<div class="gt" style="left:21px;width:19px;text-align:right;top:678px;height:9px;-webkit-text-stroke:0.25px #111;">8</div>
<div class="gt" style="left:43px;width:56px;top:678px;height:9px;letter-spacing:0.18px;-webkit-text-stroke:0.25px #111;">000-006-513-000</div>
<div class="gt" style="left:101px;width:109px;top:678px;height:9px;font-size:6.65px;-webkit-text-stroke:0.25px #111;">PHILCARE</div>
<div class="gt" style="left:297px;width:26px;top:678px;height:9px;font-size:6.4px;-webkit-text-stroke:0.25px #111;">WC160</div>
<div class="gt" style="left:326px;width:518px;top:678px;height:9px;letter-spacing:0.113px;">Income payment made by top withholding agents to their local/resident supplier of services other than those covered by other rates of withholding tax - Corporate</div>
<div class="gt" style="left:21px;width:19px;text-align:right;top:688px;height:9px;-webkit-text-stroke:0.25px #111;">9</div>
<div class="gt" style="left:43px;width:56px;top:688px;height:9px;letter-spacing:0.18px;-webkit-text-stroke:0.25px #111;">418-248-242-000</div>
<div class="gt" style="left:101px;width:109px;top:688px;height:9px;font-size:6.65px;-webkit-text-stroke:0.25px #111;">KIICHI ABE</div>
<div class="gt" style="left:297px;width:26px;top:688px;height:9px;font-size:6.4px;-webkit-text-stroke:0.25px #111;">WI010</div>
<div class="gt" style="left:326px;width:518px;top:688px;height:9px;letter-spacing:0.061px;">Professionals (Lawyers, CPAs, Engineers, etc.) - If gross income for the current year did not exceed P3M</div>
<div class="gt" style="left:43px;top:698px;width:70px;height:9px;background:#fff;letter-spacing:0.18px;-webkit-text-stroke:0.25px #111;">403-496-552-0000</div>
<div class="gt" style="left:213px;width:81px;top:698px;height:9px;font-size:6.65px;-webkit-text-stroke:0.25px #111;">SANGU, KOJI</div>
<div class="gt" style="left:297px;width:26px;top:698px;height:9px;font-size:6.4px;-webkit-text-stroke:0.25px #111;">WI040</div>
<div class="gt" style="left:326px;width:518px;top:698px;height:9px;letter-spacing:0.054px;">Fees of directors who are not employees of the company - If gross income for the current year did not exceed P3M</div>
<div class="gt" style="left:21px;width:19px;text-align:right;top:708px;height:9px;-webkit-text-stroke:0.25px #111;">9</div>
<div class="gt" style="left:43px;width:56px;top:708px;height:9px;letter-spacing:0.18px;-webkit-text-stroke:0.25px #111;">208-390-419-000</div>
<div class="gt" style="left:213px;width:81px;top:708px;height:9px;font-size:6.65px;-webkit-text-stroke:0.25px #111;">QUINTOS, JANKAYRAND</div>
<div class="gt" style="left:297px;width:26px;top:708px;height:9px;font-size:6.4px;-webkit-text-stroke:0.25px #111;">WI040</div>
<div class="gt" style="left:326px;width:518px;top:708px;height:9px;letter-spacing:0.054px;">Fees of directors who are not employees of the company - If gross income for the current year did not exceed P3M</div>
<div class="gt" style="left:21px;width:19px;text-align:right;top:718px;height:9px;-webkit-text-stroke:0.25px #111;">9</div>
<div class="gt" style="left:43px;width:56px;top:718px;height:9px;letter-spacing:0.18px;-webkit-text-stroke:0.25px #111;">208-390-419-000</div>
<div class="gt" style="left:213px;width:81px;top:718px;height:9px;font-size:6.65px;-webkit-text-stroke:0.25px #111;">QUINTOS, JANKAYRAND</div>
<div class="gt" style="left:297px;width:26px;top:718px;height:9px;font-size:6.4px;-webkit-text-stroke:0.25px #111;">WI040</div>
<div class="gt" style="left:326px;width:518px;top:718px;height:9px;letter-spacing:0.054px;">Fees of directors who are not employees of the company - If gross income for the current year did not exceed P3M</div>
<div class="gt" style="left:21px;width:19px;text-align:right;top:728px;height:9px;-webkit-text-stroke:0.25px #111;">10</div>
<div class="gt" style="left:43px;width:56px;top:728px;height:9px;letter-spacing:0.18px;-webkit-text-stroke:0.25px #111;">287-494-541-000</div>
<div class="gt" style="left:101px;width:109px;top:728px;height:9px;font-size:6.65px;-webkit-text-stroke:0.25px #111;">MARC OVEN TRADING</div>
<div class="gt" style="left:297px;width:26px;top:728px;height:9px;font-size:6.4px;-webkit-text-stroke:0.25px #111;">WC158</div>
<div class="gt" style="left:326px;width:518px;top:728px;height:9px;letter-spacing:0.113px;">Income payment made by top withholding agents to their local/resident supplier of goods other than those covered by other rates of withholding tax - Corporate</div>
<div class="gt" style="left:21px;width:19px;text-align:right;top:738px;height:9px;-webkit-text-stroke:0.25px #111;">10</div>
<div class="gt" style="left:43px;width:56px;top:738px;height:9px;letter-spacing:0.18px;-webkit-text-stroke:0.25px #111;">174-774-431-000</div>
<div class="gt" style="left:101px;width:109px;top:738px;height:9px;font-size:6.65px;-webkit-text-stroke:0.25px #111;">RLT LUSAIRE AIRCON SYSTEM</div>
<div class="gt" style="left:297px;width:26px;top:738px;height:9px;font-size:6.4px;-webkit-text-stroke:0.25px #111;">WC160</div>
<div class="gt" style="left:326px;width:518px;top:738px;height:9px;letter-spacing:0.113px;">Income payment made by top withholding agents to their local/resident supplier of services other than those covered by other rates of withholding tax - Corporate</div>
<div class="gt" style="left:21px;width:19px;text-align:right;top:748px;height:9px;-webkit-text-stroke:0.25px #111;">10</div>
<div class="gt" style="left:43px;width:56px;top:748px;height:9px;letter-spacing:0.18px;-webkit-text-stroke:0.25px #111;">304-238-763-000</div>
<div class="gt" style="left:213px;width:81px;top:748px;height:9px;font-size:6.65px;-webkit-text-stroke:0.25px #111;">TORRES, LUNINGNING</div>
<div class="gt" style="left:297px;width:26px;top:748px;height:9px;font-size:6.4px;-webkit-text-stroke:0.25px #111;">WC100</div>
<div class="gt" style="left:326px;width:518px;top:748px;height:9px;letter-spacing:0.154px;">Rentals - real/personal properties, poles, satellites &amp; transmission facilities, billboards - Corporate</div>
<div class="gt" style="left:21px;width:19px;text-align:right;top:758px;height:9px;-webkit-text-stroke:0.25px #111;">11</div>
<div class="gt" style="left:43px;width:56px;top:758px;height:9px;letter-spacing:0.18px;-webkit-text-stroke:0.25px #111;">000-407-437-000</div>
<div class="gt" style="left:101px;width:109px;top:758px;height:9px;font-size:6.65px;-webkit-text-stroke:0.25px #111;">MAXICARE HEALTH CARE</div>
<div class="gt" style="left:297px;width:26px;top:758px;height:9px;font-size:6.4px;-webkit-text-stroke:0.25px #111;">WC160</div>
<div class="gt" style="left:326px;width:518px;top:758px;height:9px;letter-spacing:0.113px;">Income payment made by top withholding agents to their local/resident supplier of services other than those covered by other rates of withholding tax - Corporate</div>
<div class="gt" style="left:21px;width:19px;text-align:right;top:768px;height:9px;-webkit-text-stroke:0.25px #111;">11</div>
<div class="gt" style="left:43px;width:56px;top:768px;height:9px;letter-spacing:0.18px;-webkit-text-stroke:0.25px #111;">304-238-763-000</div>
<div class="gt" style="left:213px;width:81px;top:768px;height:9px;font-size:6.65px;-webkit-text-stroke:0.25px #111;">TORRES, LUNINGNING</div>
<div class="gt" style="left:297px;width:26px;top:768px;height:9px;font-size:6.4px;-webkit-text-stroke:0.25px #111;">WC100</div>
<div class="gt" style="left:326px;width:518px;top:768px;height:9px;letter-spacing:0.154px;">Rentals - real/personal properties, poles, satellites &amp; transmission facilities, billboards - Corporate</div>
<div class="gt" style="left:21px;width:19px;text-align:right;top:778px;height:9px;-webkit-text-stroke:0.25px #111;">11</div>
<div class="gt" style="left:43px;width:56px;top:778px;height:9px;letter-spacing:0.18px;-webkit-text-stroke:0.25px #111;">346-405-238-000</div>
<div class="gt" style="left:101px;width:109px;top:778px;height:9px;font-size:6.65px;-webkit-text-stroke:0.25px #111;">TRADEGOOUTH CONSUMER GOODS</div>
<div class="gt" style="left:297px;width:26px;top:778px;height:9px;font-size:6.4px;-webkit-text-stroke:0.25px #111;">WC158</div>
<div class="gt" style="left:326px;width:518px;top:778px;height:9px;letter-spacing:0.113px;">Income payment made by top withholding agents to their local/resident supplier of goods other than those covered by other rates of withholding tax - Corporate</div>
<div class="gt" style="left:21px;width:19px;text-align:right;top:788px;height:9px;-webkit-text-stroke:0.25px #111;">12</div>
<div class="gt" style="left:43px;width:56px;top:788px;height:9px;letter-spacing:0.18px;-webkit-text-stroke:0.25px #111;">208-390-419-000</div>
<div class="gt" style="left:213px;width:81px;top:788px;height:9px;font-size:6.65px;-webkit-text-stroke:0.25px #111;">QUINTOS, JANKAYRAND</div>
<div class="gt" style="left:297px;width:26px;top:788px;height:9px;font-size:6.4px;-webkit-text-stroke:0.25px #111;">WI040</div>
<div class="gt" style="left:326px;width:518px;top:788px;height:9px;letter-spacing:0.054px;">Fees of directors who are not employees of the company - If gross income for the current year did not exceed P3M</div>
<div class="gt" style="left:21px;width:19px;text-align:right;top:798px;height:9px;-webkit-text-stroke:0.25px #111;">12</div>
<div class="gt" style="left:43px;width:56px;top:798px;height:9px;letter-spacing:0.18px;-webkit-text-stroke:0.25px #111;">346-405-238-000</div>
<div class="gt" style="left:101px;width:109px;top:798px;height:9px;font-size:6.65px;-webkit-text-stroke:0.25px #111;">TRADEGOOUTH CONSUMER GOODS</div>
<div class="gt" style="left:297px;width:26px;top:798px;height:9px;font-size:6.4px;-webkit-text-stroke:0.25px #111;">WC158</div>
<div class="gt" style="left:326px;width:518px;top:798px;height:9px;letter-spacing:0.113px;">Income payment made by top withholding agents to their local/resident supplier of goods other than those covered by other rates of withholding tax - Corporate</div>
<div class="gt" style="left:21px;width:19px;text-align:right;top:808px;height:9px;-webkit-text-stroke:0.25px #111;">13</div>
<div class="gt" style="left:43px;width:56px;top:808px;height:9px;letter-spacing:0.18px;-webkit-text-stroke:0.25px #111;">304-238-763-000</div>
<div class="gt" style="left:213px;width:81px;top:808px;height:9px;font-size:6.65px;-webkit-text-stroke:0.25px #111;">TORRES, LUNINGNING</div>
<div class="gt" style="left:297px;width:26px;top:808px;height:9px;font-size:6.4px;-webkit-text-stroke:0.25px #111;">WC100</div>
<div class="gt" style="left:326px;width:518px;top:808px;height:9px;letter-spacing:0.154px;">Rentals - real/personal properties, poles, satellites &amp; transmission facilities, billboards - Corporate</div>
<div class="gt" style="left:21px;width:19px;text-align:right;top:818px;height:9px;-webkit-text-stroke:0.25px #111;">14</div>
<div class="gt" style="left:43px;width:56px;top:818px;height:9px;letter-spacing:0.18px;-webkit-text-stroke:0.25px #111;">346-405-238-000</div>
<div class="gt" style="left:101px;width:109px;top:818px;height:9px;font-size:6.65px;-webkit-text-stroke:0.25px #111;">TRADEGOOUTH CONSUMER GOODS</div>
<div class="gt" style="left:297px;width:26px;top:818px;height:9px;font-size:6.4px;-webkit-text-stroke:0.25px #111;">WC158</div>
<div class="gt" style="left:326px;width:518px;top:818px;height:9px;letter-spacing:0.113px;">Income payment made by top withholding agents to their local/resident supplier of goods other than those covered by other rates of withholding tax - Corporate</div>
<div class="gt" style="left:847px;width:76px;text-align:right;top:338px;height:9px;font-weight:bold;-webkit-text-stroke:0.5px #000;font-size:6.7px;color:#111;-webkit-text-stroke:0.25px #111;">-</div>
<div class="gt" style="left:936px;width:37px;text-align:right;top:338px;height:9px;font-weight:bold;-webkit-text-stroke:0.5px #000;font-size:6.7px;color:#111;-webkit-text-stroke:0.25px #111;">-</div>
<div class="gt" style="left:986px;width:77px;text-align:right;top:338px;height:9px;font-weight:bold;-webkit-text-stroke:0.5px #000;font-size:6.7px;color:#111;-webkit-text-stroke:0.25px #111;">-</div>
<div class="gt" style="left:1076px;width:76px;text-align:right;top:338px;height:9px;font-weight:bold;-webkit-text-stroke:0.5px #000;font-size:6.7px;color:#111;-webkit-text-stroke:0.25px #111;">-</div>
<div class="gt" style="left:1165px;width:40px;text-align:right;top:338px;height:9px;font-weight:bold;-webkit-text-stroke:0.5px #000;font-size:6.7px;color:#111;-webkit-text-stroke:0.25px #111;">-</div>
<div class="gt" style="left:847px;width:85px;text-align:right;top:348px;height:9px;font-weight:bold;-webkit-text-stroke:0.5px #000;font-size:6.7px;color:#111;-webkit-text-stroke:0.25px #111;">197,821.43</div>
<div class="gt" style="left:936px;width:46px;text-align:right;top:348px;height:9px;font-weight:bold;-webkit-text-stroke:0.5px #000;font-size:6.7px;color:#111;-webkit-text-stroke:0.25px #111;">1.00</div>
<div class="gt" style="left:986px;width:86px;text-align:right;top:348px;height:9px;font-weight:bold;-webkit-text-stroke:0.5px #000;font-size:6.7px;color:#111;-webkit-text-stroke:0.25px #111;">1,978.21</div>
<div class="gt" style="left:1076px;width:76px;text-align:right;top:348px;height:9px;font-weight:bold;-webkit-text-stroke:0.5px #000;font-size:6.7px;color:#111;-webkit-text-stroke:0.25px #111;">-</div>
<div class="gt" style="left:1165px;width:40px;text-align:right;top:348px;height:9px;font-weight:bold;-webkit-text-stroke:0.5px #000;font-size:6.7px;color:#111;-webkit-text-stroke:0.25px #111;">-</div>
<div class="gt" style="left:847px;width:76px;text-align:right;top:358px;height:9px;font-weight:bold;-webkit-text-stroke:0.5px #000;font-size:6.7px;color:#111;-webkit-text-stroke:0.25px #111;">-</div>
<div class="gt" style="left:936px;width:37px;text-align:right;top:358px;height:9px;font-weight:bold;-webkit-text-stroke:0.5px #000;font-size:6.7px;color:#111;-webkit-text-stroke:0.25px #111;">-</div>
<div class="gt" style="left:986px;width:77px;text-align:right;top:358px;height:9px;font-weight:bold;-webkit-text-stroke:0.5px #000;font-size:6.7px;color:#111;-webkit-text-stroke:0.25px #111;">-</div>
<div class="gt" style="left:1076px;width:85px;text-align:right;top:358px;height:9px;font-weight:bold;-webkit-text-stroke:0.5px #000;font-size:6.7px;color:#111;-webkit-text-stroke:0.25px #111;">71,656.26</div>
<div class="gt" style="left:1165px;width:49px;text-align:right;top:358px;height:9px;font-weight:bold;-webkit-text-stroke:0.5px #000;font-size:6.7px;color:#111;-webkit-text-stroke:0.25px #111;">1.00</div>
<div class="gt" style="left:847px;width:76px;text-align:right;top:368px;height:9px;font-weight:bold;-webkit-text-stroke:0.5px #000;font-size:6.7px;color:#111;-webkit-text-stroke:0.25px #111;">-</div>
<div class="gt" style="left:936px;width:37px;text-align:right;top:368px;height:9px;font-weight:bold;-webkit-text-stroke:0.5px #000;font-size:6.7px;color:#111;-webkit-text-stroke:0.25px #111;">-</div>
<div class="gt" style="left:986px;width:77px;text-align:right;top:368px;height:9px;font-weight:bold;-webkit-text-stroke:0.5px #000;font-size:6.7px;color:#111;-webkit-text-stroke:0.25px #111;">-</div>
<div class="gt" style="left:1076px;width:76px;text-align:right;top:368px;height:9px;font-weight:bold;-webkit-text-stroke:0.5px #000;font-size:6.7px;color:#111;-webkit-text-stroke:0.25px #111;">-</div>
<div class="gt" style="left:1165px;width:40px;text-align:right;top:368px;height:9px;font-weight:bold;-webkit-text-stroke:0.5px #000;font-size:6.7px;color:#111;-webkit-text-stroke:0.25px #111;">-</div>
<div class="gt" style="left:847px;width:85px;text-align:right;top:378px;height:9px;font-weight:bold;-webkit-text-stroke:0.5px #000;font-size:6.7px;color:#111;-webkit-text-stroke:0.25px #111;">94,870.00</div>
<div class="gt" style="left:936px;width:46px;text-align:right;top:378px;height:9px;font-weight:bold;-webkit-text-stroke:0.5px #000;font-size:6.7px;color:#111;-webkit-text-stroke:0.25px #111;">5.00</div>
<div class="gt" style="left:986px;width:86px;text-align:right;top:378px;height:9px;font-weight:bold;-webkit-text-stroke:0.5px #000;font-size:6.7px;color:#111;-webkit-text-stroke:0.25px #111;">2,471.50</div>
<div class="gt" style="left:1076px;width:76px;text-align:right;top:378px;height:9px;font-weight:bold;-webkit-text-stroke:0.5px #000;font-size:6.7px;color:#111;-webkit-text-stroke:0.25px #111;">-</div>
<div class="gt" style="left:1165px;width:40px;text-align:right;top:378px;height:9px;font-weight:bold;-webkit-text-stroke:0.5px #000;font-size:6.7px;color:#111;-webkit-text-stroke:0.25px #111;">-</div>
<div class="gt" style="left:847px;width:76px;text-align:right;top:388px;height:9px;font-weight:bold;-webkit-text-stroke:0.5px #000;font-size:6.7px;color:#111;-webkit-text-stroke:0.25px #111;">-</div>
<div class="gt" style="left:936px;width:37px;text-align:right;top:388px;height:9px;font-weight:bold;-webkit-text-stroke:0.5px #000;font-size:6.7px;color:#111;-webkit-text-stroke:0.25px #111;">-</div>
<div class="gt" style="left:986px;width:77px;text-align:right;top:388px;height:9px;font-weight:bold;-webkit-text-stroke:0.5px #000;font-size:6.7px;color:#111;-webkit-text-stroke:0.25px #111;">-</div>
<div class="gt" style="left:1076px;width:85px;text-align:right;top:388px;height:9px;font-weight:bold;-webkit-text-stroke:0.5px #000;font-size:6.7px;color:#111;-webkit-text-stroke:0.25px #111;">92,278.00</div>
<div class="gt" style="left:1165px;width:49px;text-align:right;top:388px;height:9px;font-weight:bold;-webkit-text-stroke:0.5px #000;font-size:6.7px;color:#111;-webkit-text-stroke:0.25px #111;">1.00</div>
<div class="gt" style="left:847px;width:76px;text-align:right;top:398px;height:9px;font-weight:bold;-webkit-text-stroke:0.5px #000;font-size:6.7px;color:#111;-webkit-text-stroke:0.25px #111;">-</div>
<div class="gt" style="left:936px;width:37px;text-align:right;top:398px;height:9px;font-weight:bold;-webkit-text-stroke:0.5px #000;font-size:6.7px;color:#111;-webkit-text-stroke:0.25px #111;">-</div>
<div class="gt" style="left:986px;width:77px;text-align:right;top:398px;height:9px;font-weight:bold;-webkit-text-stroke:0.5px #000;font-size:6.7px;color:#111;-webkit-text-stroke:0.25px #111;">-</div>
<div class="gt" style="left:1076px;width:76px;text-align:right;top:398px;height:9px;font-weight:bold;-webkit-text-stroke:0.5px #000;font-size:6.7px;color:#111;-webkit-text-stroke:0.25px #111;">-</div>
<div class="gt" style="left:1165px;width:40px;text-align:right;top:398px;height:9px;font-weight:bold;-webkit-text-stroke:0.5px #000;font-size:6.7px;color:#111;-webkit-text-stroke:0.25px #111;">-</div>
<div class="gt" style="left:847px;width:85px;text-align:right;top:408px;height:9px;font-weight:bold;-webkit-text-stroke:0.5px #000;font-size:6.7px;color:#111;-webkit-text-stroke:0.25px #111;">51,048.64</div>
<div class="gt" style="left:936px;width:46px;text-align:right;top:408px;height:9px;font-weight:bold;-webkit-text-stroke:0.5px #000;font-size:6.7px;color:#111;-webkit-text-stroke:0.25px #111;">1.00</div>
<div class="gt" style="left:986px;width:86px;text-align:right;top:408px;height:9px;font-weight:bold;-webkit-text-stroke:0.5px #000;font-size:6.7px;color:#111;-webkit-text-stroke:0.25px #111;">510.48</div>
<div class="gt" style="left:1076px;width:76px;text-align:right;top:408px;height:9px;font-weight:bold;-webkit-text-stroke:0.5px #000;font-size:6.7px;color:#111;-webkit-text-stroke:0.25px #111;">-</div>
<div class="gt" style="left:1165px;width:40px;text-align:right;top:408px;height:9px;font-weight:bold;-webkit-text-stroke:0.5px #000;font-size:6.7px;color:#111;-webkit-text-stroke:0.25px #111;">-</div>
<div class="gt" style="left:847px;width:76px;text-align:right;top:418px;height:9px;font-weight:bold;-webkit-text-stroke:0.5px #000;font-size:6.7px;color:#111;-webkit-text-stroke:0.25px #111;">-</div>
<div class="gt" style="left:936px;width:37px;text-align:right;top:418px;height:9px;font-weight:bold;-webkit-text-stroke:0.5px #000;font-size:6.7px;color:#111;-webkit-text-stroke:0.25px #111;">-</div>
<div class="gt" style="left:986px;width:77px;text-align:right;top:418px;height:9px;font-weight:bold;-webkit-text-stroke:0.5px #000;font-size:6.7px;color:#111;-webkit-text-stroke:0.25px #111;">-</div>
<div class="gt" style="left:1076px;width:85px;text-align:right;top:418px;height:9px;font-weight:bold;-webkit-text-stroke:0.5px #000;font-size:6.7px;color:#111;-webkit-text-stroke:0.25px #111;">40,050.00</div>
<div class="gt" style="left:1165px;width:49px;text-align:right;top:418px;height:9px;font-weight:bold;-webkit-text-stroke:0.5px #000;font-size:6.7px;color:#111;-webkit-text-stroke:0.25px #111;">5.00</div>
<div class="gt" style="left:847px;width:76px;text-align:right;top:428px;height:9px;font-weight:bold;-webkit-text-stroke:0.5px #000;font-size:6.7px;color:#111;-webkit-text-stroke:0.25px #111;">-</div>
<div class="gt" style="left:936px;width:37px;text-align:right;top:428px;height:9px;font-weight:bold;-webkit-text-stroke:0.5px #000;font-size:6.7px;color:#111;-webkit-text-stroke:0.25px #111;">-</div>
<div class="gt" style="left:986px;width:77px;text-align:right;top:428px;height:9px;font-weight:bold;-webkit-text-stroke:0.5px #000;font-size:6.7px;color:#111;-webkit-text-stroke:0.25px #111;">-</div>
<div class="gt" style="left:1076px;width:76px;text-align:right;top:428px;height:9px;font-weight:bold;-webkit-text-stroke:0.5px #000;font-size:6.7px;color:#111;-webkit-text-stroke:0.25px #111;">-</div>
<div class="gt" style="left:1165px;width:40px;text-align:right;top:428px;height:9px;font-weight:bold;-webkit-text-stroke:0.5px #000;font-size:6.7px;color:#111;-webkit-text-stroke:0.25px #111;">-</div>
<div class="gt" style="left:847px;width:85px;text-align:right;top:438px;height:9px;font-weight:bold;-webkit-text-stroke:0.5px #000;font-size:6.7px;color:#111;-webkit-text-stroke:0.25px #111;">5,500.00</div>
<div class="gt" style="left:936px;width:46px;text-align:right;top:438px;height:9px;font-weight:bold;-webkit-text-stroke:0.5px #000;font-size:6.7px;color:#111;-webkit-text-stroke:0.25px #111;">5.00</div>
<div class="gt" style="left:986px;width:86px;text-align:right;top:438px;height:9px;font-weight:bold;-webkit-text-stroke:0.5px #000;font-size:6.7px;color:#111;-webkit-text-stroke:0.25px #111;">275.00</div>
<div class="gt" style="left:1076px;width:76px;text-align:right;top:438px;height:9px;font-weight:bold;-webkit-text-stroke:0.5px #000;font-size:6.7px;color:#111;-webkit-text-stroke:0.25px #111;">-</div>
<div class="gt" style="left:1165px;width:40px;text-align:right;top:438px;height:9px;font-weight:bold;-webkit-text-stroke:0.5px #000;font-size:6.7px;color:#111;-webkit-text-stroke:0.25px #111;">-</div>
<div class="gt" style="left:847px;width:76px;text-align:right;top:448px;height:9px;font-weight:bold;-webkit-text-stroke:0.5px #000;font-size:6.7px;color:#111;-webkit-text-stroke:0.25px #111;">-</div>
<div class="gt" style="left:936px;width:37px;text-align:right;top:448px;height:9px;font-weight:bold;-webkit-text-stroke:0.5px #000;font-size:6.7px;color:#111;-webkit-text-stroke:0.25px #111;">-</div>
<div class="gt" style="left:986px;width:77px;text-align:right;top:448px;height:9px;font-weight:bold;-webkit-text-stroke:0.5px #000;font-size:6.7px;color:#111;-webkit-text-stroke:0.25px #111;">-</div>
<div class="gt" style="left:1076px;width:85px;text-align:right;top:448px;height:9px;font-weight:bold;-webkit-text-stroke:0.5px #000;font-size:6.7px;color:#111;-webkit-text-stroke:0.25px #111;">5,500.00</div>
<div class="gt" style="left:1165px;width:49px;text-align:right;top:448px;height:9px;font-weight:bold;-webkit-text-stroke:0.5px #000;font-size:6.7px;color:#111;-webkit-text-stroke:0.25px #111;">5.00</div>
<div class="gt" style="left:847px;width:85px;text-align:right;top:458px;height:9px;font-weight:bold;-webkit-text-stroke:0.5px #000;font-size:6.7px;color:#111;-webkit-text-stroke:0.25px #111;">45,888.57</div>
<div class="gt" style="left:936px;width:46px;text-align:right;top:458px;height:9px;font-weight:bold;-webkit-text-stroke:0.5px #000;font-size:6.7px;color:#111;-webkit-text-stroke:0.25px #111;">2.00</div>
<div class="gt" style="left:986px;width:86px;text-align:right;top:458px;height:9px;font-weight:bold;-webkit-text-stroke:0.5px #000;font-size:6.7px;color:#111;-webkit-text-stroke:0.25px #111;">917.77</div>
<div class="gt" style="left:1076px;width:76px;text-align:right;top:458px;height:9px;font-weight:bold;-webkit-text-stroke:0.5px #000;font-size:6.7px;color:#111;-webkit-text-stroke:0.25px #111;">-</div>
<div class="gt" style="left:1165px;width:40px;text-align:right;top:458px;height:9px;font-weight:bold;-webkit-text-stroke:0.5px #000;font-size:6.7px;color:#111;-webkit-text-stroke:0.25px #111;">-</div>
<div class="gt" style="left:847px;width:76px;text-align:right;top:468px;height:9px;font-weight:bold;-webkit-text-stroke:0.5px #000;font-size:6.7px;color:#111;-webkit-text-stroke:0.25px #111;">-</div>
<div class="gt" style="left:936px;width:37px;text-align:right;top:468px;height:9px;font-weight:bold;-webkit-text-stroke:0.5px #000;font-size:6.7px;color:#111;-webkit-text-stroke:0.25px #111;">-</div>
<div class="gt" style="left:986px;width:77px;text-align:right;top:468px;height:9px;font-weight:bold;-webkit-text-stroke:0.5px #000;font-size:6.7px;color:#111;-webkit-text-stroke:0.25px #111;">-</div>
<div class="gt" style="left:1076px;width:76px;text-align:right;top:468px;height:9px;font-weight:bold;-webkit-text-stroke:0.5px #000;font-size:6.7px;color:#111;-webkit-text-stroke:0.25px #111;">-</div>
<div class="gt" style="left:1165px;width:40px;text-align:right;top:468px;height:9px;font-weight:bold;-webkit-text-stroke:0.5px #000;font-size:6.7px;color:#111;-webkit-text-stroke:0.25px #111;">-</div>
<div class="gt" style="left:847px;width:76px;text-align:right;top:478px;height:9px;font-weight:bold;-webkit-text-stroke:0.5px #000;font-size:6.7px;color:#111;-webkit-text-stroke:0.25px #111;">-</div>
<div class="gt" style="left:936px;width:37px;text-align:right;top:478px;height:9px;font-weight:bold;-webkit-text-stroke:0.5px #000;font-size:6.7px;color:#111;-webkit-text-stroke:0.25px #111;">-</div>
<div class="gt" style="left:986px;width:77px;text-align:right;top:478px;height:9px;font-weight:bold;-webkit-text-stroke:0.5px #000;font-size:6.7px;color:#111;-webkit-text-stroke:0.25px #111;">-</div>
<div class="gt" style="left:1076px;width:85px;text-align:right;top:478px;height:9px;font-weight:bold;-webkit-text-stroke:0.5px #000;font-size:6.7px;color:#111;-webkit-text-stroke:0.25px #111;">43,472.56</div>
<div class="gt" style="left:1165px;width:49px;text-align:right;top:478px;height:9px;font-weight:bold;-webkit-text-stroke:0.5px #000;font-size:6.7px;color:#111;-webkit-text-stroke:0.25px #111;">2.00</div>
<div class="gt" style="left:847px;width:85px;text-align:right;top:488px;height:9px;font-weight:bold;-webkit-text-stroke:0.5px #000;font-size:6.7px;color:#111;-webkit-text-stroke:0.25px #111;">6,434.63</div>
<div class="gt" style="left:936px;width:46px;text-align:right;top:488px;height:9px;font-weight:bold;-webkit-text-stroke:0.5px #000;font-size:6.7px;color:#111;-webkit-text-stroke:0.25px #111;">1.00</div>
<div class="gt" style="left:986px;width:86px;text-align:right;top:488px;height:9px;font-weight:bold;-webkit-text-stroke:0.5px #000;font-size:6.7px;color:#111;-webkit-text-stroke:0.25px #111;">64.28</div>
<div class="gt" style="left:1076px;width:76px;text-align:right;top:488px;height:9px;font-weight:bold;-webkit-text-stroke:0.5px #000;font-size:6.7px;color:#111;-webkit-text-stroke:0.25px #111;">-</div>
<div class="gt" style="left:1165px;width:40px;text-align:right;top:488px;height:9px;font-weight:bold;-webkit-text-stroke:0.5px #000;font-size:6.7px;color:#111;-webkit-text-stroke:0.25px #111;">-</div>
<div class="gt" style="left:847px;width:76px;text-align:right;top:498px;height:9px;font-weight:bold;-webkit-text-stroke:0.5px #000;font-size:6.7px;color:#111;-webkit-text-stroke:0.25px #111;">-</div>
<div class="gt" style="left:936px;width:37px;text-align:right;top:498px;height:9px;font-weight:bold;-webkit-text-stroke:0.5px #000;font-size:6.7px;color:#111;-webkit-text-stroke:0.25px #111;">-</div>
<div class="gt" style="left:986px;width:77px;text-align:right;top:498px;height:9px;font-weight:bold;-webkit-text-stroke:0.5px #000;font-size:6.7px;color:#111;-webkit-text-stroke:0.25px #111;">-</div>
<div class="gt" style="left:1076px;width:85px;text-align:right;top:498px;height:9px;font-weight:bold;-webkit-text-stroke:0.5px #000;font-size:6.7px;color:#111;-webkit-text-stroke:0.25px #111;">107,000.00</div>
<div class="gt" style="left:1165px;width:49px;text-align:right;top:498px;height:9px;font-weight:bold;-webkit-text-stroke:0.5px #000;font-size:6.7px;color:#111;-webkit-text-stroke:0.25px #111;">5.00</div>
<div class="gt" style="left:847px;width:76px;text-align:right;top:508px;height:9px;font-weight:bold;-webkit-text-stroke:0.5px #000;font-size:6.7px;color:#111;-webkit-text-stroke:0.25px #111;">-</div>
<div class="gt" style="left:936px;width:37px;text-align:right;top:508px;height:9px;font-weight:bold;-webkit-text-stroke:0.5px #000;font-size:6.7px;color:#111;-webkit-text-stroke:0.25px #111;">-</div>
<div class="gt" style="left:986px;width:77px;text-align:right;top:508px;height:9px;font-weight:bold;-webkit-text-stroke:0.5px #000;font-size:6.7px;color:#111;-webkit-text-stroke:0.25px #111;">-</div>
<div class="gt" style="left:1076px;width:76px;text-align:right;top:508px;height:9px;font-weight:bold;-webkit-text-stroke:0.5px #000;font-size:6.7px;color:#111;-webkit-text-stroke:0.25px #111;">-</div>
<div class="gt" style="left:1165px;width:40px;text-align:right;top:508px;height:9px;font-weight:bold;-webkit-text-stroke:0.5px #000;font-size:6.7px;color:#111;-webkit-text-stroke:0.25px #111;">-</div>
<div class="gt" style="left:847px;width:76px;text-align:right;top:518px;height:9px;font-weight:bold;-webkit-text-stroke:0.5px #000;font-size:6.7px;color:#111;-webkit-text-stroke:0.25px #111;">-</div>
<div class="gt" style="left:936px;width:37px;text-align:right;top:518px;height:9px;font-weight:bold;-webkit-text-stroke:0.5px #000;font-size:6.7px;color:#111;-webkit-text-stroke:0.25px #111;">-</div>
<div class="gt" style="left:986px;width:77px;text-align:right;top:518px;height:9px;font-weight:bold;-webkit-text-stroke:0.5px #000;font-size:6.7px;color:#111;-webkit-text-stroke:0.25px #111;">-</div>
<div class="gt" style="left:1076px;width:76px;text-align:right;top:518px;height:9px;font-weight:bold;-webkit-text-stroke:0.5px #000;font-size:6.7px;color:#111;-webkit-text-stroke:0.25px #111;">-</div>
<div class="gt" style="left:1165px;width:40px;text-align:right;top:518px;height:9px;font-weight:bold;-webkit-text-stroke:0.5px #000;font-size:6.7px;color:#111;-webkit-text-stroke:0.25px #111;">-</div>
<div class="gt" style="left:847px;width:85px;text-align:right;top:528px;height:9px;font-weight:bold;-webkit-text-stroke:0.5px #000;font-size:6.7px;color:#111;-webkit-text-stroke:0.25px #111;">107,000.00</div>
<div class="gt" style="left:936px;width:46px;text-align:right;top:528px;height:9px;font-weight:bold;-webkit-text-stroke:0.5px #000;font-size:6.7px;color:#111;-webkit-text-stroke:0.25px #111;">8.00</div>
<div class="gt" style="left:986px;width:86px;text-align:right;top:528px;height:9px;font-weight:bold;-webkit-text-stroke:0.5px #000;font-size:6.7px;color:#111;-webkit-text-stroke:0.25px #111;">8,560.00</div>
<div class="gt" style="left:1076px;width:76px;text-align:right;top:528px;height:9px;font-weight:bold;-webkit-text-stroke:0.5px #000;font-size:6.7px;color:#111;-webkit-text-stroke:0.25px #111;">-</div>
<div class="gt" style="left:1165px;width:40px;text-align:right;top:528px;height:9px;font-weight:bold;-webkit-text-stroke:0.5px #000;font-size:6.7px;color:#111;-webkit-text-stroke:0.25px #111;">-</div>
<div class="gt" style="left:847px;width:76px;text-align:right;top:538px;height:9px;font-weight:bold;-webkit-text-stroke:0.5px #000;font-size:6.7px;color:#111;-webkit-text-stroke:0.25px #111;">-</div>
<div class="gt" style="left:936px;width:37px;text-align:right;top:538px;height:9px;font-weight:bold;-webkit-text-stroke:0.5px #000;font-size:6.7px;color:#111;-webkit-text-stroke:0.25px #111;">-</div>
<div class="gt" style="left:986px;width:77px;text-align:right;top:538px;height:9px;font-weight:bold;-webkit-text-stroke:0.5px #000;font-size:6.7px;color:#111;-webkit-text-stroke:0.25px #111;">-</div>
<div class="gt" style="left:1076px;width:85px;text-align:right;top:538px;height:9px;font-weight:bold;-webkit-text-stroke:0.5px #000;font-size:6.7px;color:#111;-webkit-text-stroke:0.25px #111;">12,651.79</div>
<div class="gt" style="left:1165px;width:49px;text-align:right;top:538px;height:9px;font-weight:bold;-webkit-text-stroke:0.5px #000;font-size:6.7px;color:#111;-webkit-text-stroke:0.25px #111;">1.00</div>
<div class="gt" style="left:847px;width:76px;text-align:right;top:548px;height:9px;font-weight:bold;-webkit-text-stroke:0.5px #000;font-size:6.7px;color:#111;-webkit-text-stroke:0.25px #111;">-</div>
<div class="gt" style="left:936px;width:37px;text-align:right;top:548px;height:9px;font-weight:bold;-webkit-text-stroke:0.5px #000;font-size:6.7px;color:#111;-webkit-text-stroke:0.25px #111;">-</div>
<div class="gt" style="left:986px;width:77px;text-align:right;top:548px;height:9px;font-weight:bold;-webkit-text-stroke:0.5px #000;font-size:6.7px;color:#111;-webkit-text-stroke:0.25px #111;">-</div>
<div class="gt" style="left:1076px;width:76px;text-align:right;top:548px;height:9px;font-weight:bold;-webkit-text-stroke:0.5px #000;font-size:6.7px;color:#111;-webkit-text-stroke:0.25px #111;">-</div>
<div class="gt" style="left:1165px;width:40px;text-align:right;top:548px;height:9px;font-weight:bold;-webkit-text-stroke:0.5px #000;font-size:6.7px;color:#111;-webkit-text-stroke:0.25px #111;">-</div>
<div class="gt" style="left:847px;width:85px;text-align:right;top:558px;height:9px;font-weight:bold;-webkit-text-stroke:0.5px #000;font-size:6.7px;color:#111;-webkit-text-stroke:0.25px #111;">24,232.14</div>
<div class="gt" style="left:936px;width:46px;text-align:right;top:558px;height:9px;font-weight:bold;-webkit-text-stroke:0.5px #000;font-size:6.7px;color:#111;-webkit-text-stroke:0.25px #111;">1.00</div>
<div class="gt" style="left:986px;width:86px;text-align:right;top:558px;height:9px;font-weight:bold;-webkit-text-stroke:0.5px #000;font-size:6.7px;color:#111;-webkit-text-stroke:0.25px #111;">242.32</div>
<div class="gt" style="left:1076px;width:76px;text-align:right;top:558px;height:9px;font-weight:bold;-webkit-text-stroke:0.5px #000;font-size:6.7px;color:#111;-webkit-text-stroke:0.25px #111;">-</div>
<div class="gt" style="left:1165px;width:40px;text-align:right;top:558px;height:9px;font-weight:bold;-webkit-text-stroke:0.5px #000;font-size:6.7px;color:#111;-webkit-text-stroke:0.25px #111;">-</div>
<div class="gt" style="left:847px;width:76px;text-align:right;top:568px;height:9px;font-weight:bold;-webkit-text-stroke:0.5px #000;font-size:6.7px;color:#111;-webkit-text-stroke:0.25px #111;">-</div>
<div class="gt" style="left:936px;width:37px;text-align:right;top:568px;height:9px;font-weight:bold;-webkit-text-stroke:0.5px #000;font-size:6.7px;color:#111;-webkit-text-stroke:0.25px #111;">-</div>
<div class="gt" style="left:986px;width:77px;text-align:right;top:568px;height:9px;font-weight:bold;-webkit-text-stroke:0.5px #000;font-size:6.7px;color:#111;-webkit-text-stroke:0.25px #111;">-</div>
<div class="gt" style="left:1076px;width:85px;text-align:right;top:568px;height:9px;font-weight:bold;-webkit-text-stroke:0.5px #000;font-size:6.7px;color:#111;-webkit-text-stroke:0.25px #111;">214,918.00</div>
<div class="gt" style="left:1165px;width:49px;text-align:right;top:568px;height:9px;font-weight:bold;-webkit-text-stroke:0.5px #000;font-size:6.7px;color:#111;-webkit-text-stroke:0.25px #111;">2.00</div>
<div class="gt" style="left:847px;width:76px;text-align:right;top:578px;height:9px;font-weight:bold;-webkit-text-stroke:0.5px #000;font-size:6.7px;color:#111;-webkit-text-stroke:0.25px #111;">-</div>
<div class="gt" style="left:936px;width:37px;text-align:right;top:578px;height:9px;font-weight:bold;-webkit-text-stroke:0.5px #000;font-size:6.7px;color:#111;-webkit-text-stroke:0.25px #111;">-</div>
<div class="gt" style="left:986px;width:77px;text-align:right;top:578px;height:9px;font-weight:bold;-webkit-text-stroke:0.5px #000;font-size:6.7px;color:#111;-webkit-text-stroke:0.25px #111;">-</div>
<div class="gt" style="left:1076px;width:76px;text-align:right;top:578px;height:9px;font-weight:bold;-webkit-text-stroke:0.5px #000;font-size:6.7px;color:#111;-webkit-text-stroke:0.25px #111;">-</div>
<div class="gt" style="left:1165px;width:40px;text-align:right;top:578px;height:9px;font-weight:bold;-webkit-text-stroke:0.5px #000;font-size:6.7px;color:#111;-webkit-text-stroke:0.25px #111;">-</div>
<div class="gt" style="left:847px;width:76px;text-align:right;top:588px;height:9px;font-weight:bold;-webkit-text-stroke:0.5px #000;font-size:6.7px;color:#111;-webkit-text-stroke:0.25px #111;">-</div>
<div class="gt" style="left:936px;width:37px;text-align:right;top:588px;height:9px;font-weight:bold;-webkit-text-stroke:0.5px #000;font-size:6.7px;color:#111;-webkit-text-stroke:0.25px #111;">-</div>
<div class="gt" style="left:986px;width:77px;text-align:right;top:588px;height:9px;font-weight:bold;-webkit-text-stroke:0.5px #000;font-size:6.7px;color:#111;-webkit-text-stroke:0.25px #111;">-</div>
<div class="gt" style="left:1076px;width:85px;text-align:right;top:588px;height:9px;font-weight:bold;-webkit-text-stroke:0.5px #000;font-size:6.7px;color:#111;-webkit-text-stroke:0.25px #111;">240,000.00</div>
<div class="gt" style="left:1165px;width:49px;text-align:right;top:588px;height:9px;font-weight:bold;-webkit-text-stroke:0.5px #000;font-size:6.7px;color:#111;-webkit-text-stroke:0.25px #111;">5.00</div>
<div class="gt" style="left:847px;width:85px;text-align:right;top:598px;height:9px;font-weight:bold;-webkit-text-stroke:0.5px #000;font-size:6.7px;color:#111;-webkit-text-stroke:0.25px #111;">120,000.00</div>
<div class="gt" style="left:936px;width:46px;text-align:right;top:598px;height:9px;font-weight:bold;-webkit-text-stroke:0.5px #000;font-size:6.7px;color:#111;-webkit-text-stroke:0.25px #111;">5.00</div>
<div class="gt" style="left:986px;width:86px;text-align:right;top:598px;height:9px;font-weight:bold;-webkit-text-stroke:0.5px #000;font-size:6.7px;color:#111;-webkit-text-stroke:0.25px #111;">6,000.00</div>
<div class="gt" style="left:1076px;width:76px;text-align:right;top:598px;height:9px;font-weight:bold;-webkit-text-stroke:0.5px #000;font-size:6.7px;color:#111;-webkit-text-stroke:0.25px #111;">-</div>
<div class="gt" style="left:1165px;width:40px;text-align:right;top:598px;height:9px;font-weight:bold;-webkit-text-stroke:0.5px #000;font-size:6.7px;color:#111;-webkit-text-stroke:0.25px #111;">-</div>
<div class="gt" style="left:847px;width:76px;text-align:right;top:608px;height:9px;font-weight:bold;-webkit-text-stroke:0.5px #000;font-size:6.7px;color:#111;-webkit-text-stroke:0.25px #111;">-</div>
<div class="gt" style="left:936px;width:37px;text-align:right;top:608px;height:9px;font-weight:bold;-webkit-text-stroke:0.5px #000;font-size:6.7px;color:#111;-webkit-text-stroke:0.25px #111;">-</div>
<div class="gt" style="left:986px;width:77px;text-align:right;top:608px;height:9px;font-weight:bold;-webkit-text-stroke:0.5px #000;font-size:6.7px;color:#111;-webkit-text-stroke:0.25px #111;">-</div>
<div class="gt" style="left:1076px;width:85px;text-align:right;top:608px;height:9px;font-weight:bold;-webkit-text-stroke:0.5px #000;font-size:6.7px;color:#111;-webkit-text-stroke:0.25px #111;">120,000.00</div>
<div class="gt" style="left:1165px;width:49px;text-align:right;top:608px;height:9px;font-weight:bold;-webkit-text-stroke:0.5px #000;font-size:6.7px;color:#111;-webkit-text-stroke:0.25px #111;">5.00</div>
<div class="gt" style="left:847px;width:76px;text-align:right;top:618px;height:9px;font-weight:bold;-webkit-text-stroke:0.5px #000;font-size:6.7px;color:#111;-webkit-text-stroke:0.25px #111;">-</div>
<div class="gt" style="left:936px;width:37px;text-align:right;top:618px;height:9px;font-weight:bold;-webkit-text-stroke:0.5px #000;font-size:6.7px;color:#111;-webkit-text-stroke:0.25px #111;">-</div>
<div class="gt" style="left:986px;width:77px;text-align:right;top:618px;height:9px;font-weight:bold;-webkit-text-stroke:0.5px #000;font-size:6.7px;color:#111;-webkit-text-stroke:0.25px #111;">-</div>
<div class="gt" style="left:1076px;width:76px;text-align:right;top:618px;height:9px;font-weight:bold;-webkit-text-stroke:0.5px #000;font-size:6.7px;color:#111;-webkit-text-stroke:0.25px #111;">-</div>
<div class="gt" style="left:1165px;width:40px;text-align:right;top:618px;height:9px;font-weight:bold;-webkit-text-stroke:0.5px #000;font-size:6.7px;color:#111;-webkit-text-stroke:0.25px #111;">-</div>
<div class="gt" style="left:847px;width:76px;text-align:right;top:628px;height:9px;font-weight:bold;-webkit-text-stroke:0.5px #000;font-size:6.7px;color:#111;-webkit-text-stroke:0.25px #111;">-</div>
<div class="gt" style="left:936px;width:37px;text-align:right;top:628px;height:9px;font-weight:bold;-webkit-text-stroke:0.5px #000;font-size:6.7px;color:#111;-webkit-text-stroke:0.25px #111;">-</div>
<div class="gt" style="left:986px;width:77px;text-align:right;top:628px;height:9px;font-weight:bold;-webkit-text-stroke:0.5px #000;font-size:6.7px;color:#111;-webkit-text-stroke:0.25px #111;">-</div>
<div class="gt" style="left:1076px;width:76px;text-align:right;top:628px;height:9px;font-weight:bold;-webkit-text-stroke:0.5px #000;font-size:6.7px;color:#111;-webkit-text-stroke:0.25px #111;">-</div>
<div class="gt" style="left:1165px;width:40px;text-align:right;top:628px;height:9px;font-weight:bold;-webkit-text-stroke:0.5px #000;font-size:6.7px;color:#111;-webkit-text-stroke:0.25px #111;">-</div>
<div class="gt" style="left:847px;width:85px;text-align:right;top:638px;height:9px;font-weight:bold;-webkit-text-stroke:0.5px #000;font-size:6.7px;color:#111;-webkit-text-stroke:0.25px #111;">107,000.00</div>
<div class="gt" style="left:936px;width:46px;text-align:right;top:638px;height:9px;font-weight:bold;-webkit-text-stroke:0.5px #000;font-size:6.7px;color:#111;-webkit-text-stroke:0.25px #111;">8.00</div>
<div class="gt" style="left:986px;width:86px;text-align:right;top:638px;height:9px;font-weight:bold;-webkit-text-stroke:0.5px #000;font-size:6.7px;color:#111;-webkit-text-stroke:0.25px #111;">8,560.00</div>
<div class="gt" style="left:1076px;width:76px;text-align:right;top:638px;height:9px;font-weight:bold;-webkit-text-stroke:0.5px #000;font-size:6.7px;color:#111;-webkit-text-stroke:0.25px #111;">-</div>
<div class="gt" style="left:1165px;width:40px;text-align:right;top:638px;height:9px;font-weight:bold;-webkit-text-stroke:0.5px #000;font-size:6.7px;color:#111;-webkit-text-stroke:0.25px #111;">-</div>
<div class="gt" style="left:847px;width:76px;text-align:right;top:648px;height:9px;font-weight:bold;-webkit-text-stroke:0.5px #000;font-size:6.7px;color:#111;-webkit-text-stroke:0.25px #111;">-</div>
<div class="gt" style="left:936px;width:37px;text-align:right;top:648px;height:9px;font-weight:bold;-webkit-text-stroke:0.5px #000;font-size:6.7px;color:#111;-webkit-text-stroke:0.25px #111;">-</div>
<div class="gt" style="left:986px;width:77px;text-align:right;top:648px;height:9px;font-weight:bold;-webkit-text-stroke:0.5px #000;font-size:6.7px;color:#111;-webkit-text-stroke:0.25px #111;">-</div>
<div class="gt" style="left:1076px;width:85px;text-align:right;top:648px;height:9px;font-weight:bold;-webkit-text-stroke:0.5px #000;font-size:6.7px;color:#111;-webkit-text-stroke:0.25px #111;">12,651.79</div>
<div class="gt" style="left:1165px;width:49px;text-align:right;top:648px;height:9px;font-weight:bold;-webkit-text-stroke:0.5px #000;font-size:6.7px;color:#111;-webkit-text-stroke:0.25px #111;">1.00</div>
<div class="gt" style="left:847px;width:76px;text-align:right;top:658px;height:9px;font-weight:bold;-webkit-text-stroke:0.5px #000;font-size:6.7px;color:#111;-webkit-text-stroke:0.25px #111;">-</div>
<div class="gt" style="left:936px;width:37px;text-align:right;top:658px;height:9px;font-weight:bold;-webkit-text-stroke:0.5px #000;font-size:6.7px;color:#111;-webkit-text-stroke:0.25px #111;">-</div>
<div class="gt" style="left:986px;width:77px;text-align:right;top:658px;height:9px;font-weight:bold;-webkit-text-stroke:0.5px #000;font-size:6.7px;color:#111;-webkit-text-stroke:0.25px #111;">-</div>
<div class="gt" style="left:1076px;width:76px;text-align:right;top:658px;height:9px;font-weight:bold;-webkit-text-stroke:0.5px #000;font-size:6.7px;color:#111;-webkit-text-stroke:0.25px #111;">-</div>
<div class="gt" style="left:1165px;width:40px;text-align:right;top:658px;height:9px;font-weight:bold;-webkit-text-stroke:0.5px #000;font-size:6.7px;color:#111;-webkit-text-stroke:0.25px #111;">-</div>
<div class="gt" style="left:847px;width:85px;text-align:right;top:668px;height:9px;font-weight:bold;-webkit-text-stroke:0.5px #000;font-size:6.7px;color:#111;-webkit-text-stroke:0.25px #111;">24,232.14</div>
<div class="gt" style="left:936px;width:46px;text-align:right;top:668px;height:9px;font-weight:bold;-webkit-text-stroke:0.5px #000;font-size:6.7px;color:#111;-webkit-text-stroke:0.25px #111;">1.00</div>
<div class="gt" style="left:986px;width:86px;text-align:right;top:668px;height:9px;font-weight:bold;-webkit-text-stroke:0.5px #000;font-size:6.7px;color:#111;-webkit-text-stroke:0.25px #111;">242.32</div>
<div class="gt" style="left:1076px;width:76px;text-align:right;top:668px;height:9px;font-weight:bold;-webkit-text-stroke:0.5px #000;font-size:6.7px;color:#111;-webkit-text-stroke:0.25px #111;">-</div>
<div class="gt" style="left:1165px;width:40px;text-align:right;top:668px;height:9px;font-weight:bold;-webkit-text-stroke:0.5px #000;font-size:6.7px;color:#111;-webkit-text-stroke:0.25px #111;">-</div>
<div class="gt" style="left:847px;width:76px;text-align:right;top:678px;height:9px;font-weight:bold;-webkit-text-stroke:0.5px #000;font-size:6.7px;color:#111;-webkit-text-stroke:0.25px #111;">-</div>
<div class="gt" style="left:936px;width:37px;text-align:right;top:678px;height:9px;font-weight:bold;-webkit-text-stroke:0.5px #000;font-size:6.7px;color:#111;-webkit-text-stroke:0.25px #111;">-</div>
<div class="gt" style="left:986px;width:77px;text-align:right;top:678px;height:9px;font-weight:bold;-webkit-text-stroke:0.5px #000;font-size:6.7px;color:#111;-webkit-text-stroke:0.25px #111;">-</div>
<div class="gt" style="left:1076px;width:85px;text-align:right;top:678px;height:9px;font-weight:bold;-webkit-text-stroke:0.5px #000;font-size:6.7px;color:#111;-webkit-text-stroke:0.25px #111;">214,918.00</div>
<div class="gt" style="left:1165px;width:49px;text-align:right;top:678px;height:9px;font-weight:bold;-webkit-text-stroke:0.5px #000;font-size:6.7px;color:#111;-webkit-text-stroke:0.25px #111;">2.00</div>
<div class="gt" style="left:847px;width:76px;text-align:right;top:688px;height:9px;font-weight:bold;-webkit-text-stroke:0.5px #000;font-size:6.7px;color:#111;-webkit-text-stroke:0.25px #111;">-</div>
<div class="gt" style="left:936px;width:37px;text-align:right;top:688px;height:9px;font-weight:bold;-webkit-text-stroke:0.5px #000;font-size:6.7px;color:#111;-webkit-text-stroke:0.25px #111;">-</div>
<div class="gt" style="left:986px;width:77px;text-align:right;top:688px;height:9px;font-weight:bold;-webkit-text-stroke:0.5px #000;font-size:6.7px;color:#111;-webkit-text-stroke:0.25px #111;">-</div>
<div class="gt" style="left:1076px;width:76px;text-align:right;top:688px;height:9px;font-weight:bold;-webkit-text-stroke:0.5px #000;font-size:6.7px;color:#111;-webkit-text-stroke:0.25px #111;">-</div>
<div class="gt" style="left:1165px;width:40px;text-align:right;top:688px;height:9px;font-weight:bold;-webkit-text-stroke:0.5px #000;font-size:6.7px;color:#111;-webkit-text-stroke:0.25px #111;">-</div>
<div class="gt" style="left:847px;width:76px;text-align:right;top:698px;height:9px;font-weight:bold;-webkit-text-stroke:0.5px #000;font-size:6.7px;color:#111;-webkit-text-stroke:0.25px #111;">-</div>
<div class="gt" style="left:936px;width:37px;text-align:right;top:698px;height:9px;font-weight:bold;-webkit-text-stroke:0.5px #000;font-size:6.7px;color:#111;-webkit-text-stroke:0.25px #111;">-</div>
<div class="gt" style="left:986px;width:77px;text-align:right;top:698px;height:9px;font-weight:bold;-webkit-text-stroke:0.5px #000;font-size:6.7px;color:#111;-webkit-text-stroke:0.25px #111;">-</div>
<div class="gt" style="left:1076px;width:85px;text-align:right;top:698px;height:9px;font-weight:bold;-webkit-text-stroke:0.5px #000;font-size:6.7px;color:#111;-webkit-text-stroke:0.25px #111;">240,000.00</div>
<div class="gt" style="left:1165px;width:49px;text-align:right;top:698px;height:9px;font-weight:bold;-webkit-text-stroke:0.5px #000;font-size:6.7px;color:#111;-webkit-text-stroke:0.25px #111;">5.00</div>
<div class="gt" style="left:847px;width:85px;text-align:right;top:708px;height:9px;font-weight:bold;-webkit-text-stroke:0.5px #000;font-size:6.7px;color:#111;-webkit-text-stroke:0.25px #111;">120,000.00</div>
<div class="gt" style="left:936px;width:46px;text-align:right;top:708px;height:9px;font-weight:bold;-webkit-text-stroke:0.5px #000;font-size:6.7px;color:#111;-webkit-text-stroke:0.25px #111;">5.00</div>
<div class="gt" style="left:986px;width:86px;text-align:right;top:708px;height:9px;font-weight:bold;-webkit-text-stroke:0.5px #000;font-size:6.7px;color:#111;-webkit-text-stroke:0.25px #111;">6,000.00</div>
<div class="gt" style="left:1076px;width:76px;text-align:right;top:708px;height:9px;font-weight:bold;-webkit-text-stroke:0.5px #000;font-size:6.7px;color:#111;-webkit-text-stroke:0.25px #111;">-</div>
<div class="gt" style="left:1165px;width:40px;text-align:right;top:708px;height:9px;font-weight:bold;-webkit-text-stroke:0.5px #000;font-size:6.7px;color:#111;-webkit-text-stroke:0.25px #111;">-</div>
<div class="gt" style="left:847px;width:76px;text-align:right;top:718px;height:9px;font-weight:bold;-webkit-text-stroke:0.5px #000;font-size:6.7px;color:#111;-webkit-text-stroke:0.25px #111;">-</div>
<div class="gt" style="left:936px;width:37px;text-align:right;top:718px;height:9px;font-weight:bold;-webkit-text-stroke:0.5px #000;font-size:6.7px;color:#111;-webkit-text-stroke:0.25px #111;">-</div>
<div class="gt" style="left:986px;width:77px;text-align:right;top:718px;height:9px;font-weight:bold;-webkit-text-stroke:0.5px #000;font-size:6.7px;color:#111;-webkit-text-stroke:0.25px #111;">-</div>
<div class="gt" style="left:1076px;width:85px;text-align:right;top:718px;height:9px;font-weight:bold;-webkit-text-stroke:0.5px #000;font-size:6.7px;color:#111;-webkit-text-stroke:0.25px #111;">120,000.00</div>
<div class="gt" style="left:1165px;width:49px;text-align:right;top:718px;height:9px;font-weight:bold;-webkit-text-stroke:0.5px #000;font-size:6.7px;color:#111;-webkit-text-stroke:0.25px #111;">5.00</div>
<div class="gt" style="left:847px;width:76px;text-align:right;top:728px;height:9px;font-weight:bold;-webkit-text-stroke:0.5px #000;font-size:6.7px;color:#111;-webkit-text-stroke:0.25px #111;">-</div>
<div class="gt" style="left:936px;width:37px;text-align:right;top:728px;height:9px;font-weight:bold;-webkit-text-stroke:0.5px #000;font-size:6.7px;color:#111;-webkit-text-stroke:0.25px #111;">-</div>
<div class="gt" style="left:986px;width:77px;text-align:right;top:728px;height:9px;font-weight:bold;-webkit-text-stroke:0.5px #000;font-size:6.7px;color:#111;-webkit-text-stroke:0.25px #111;">-</div>
<div class="gt" style="left:1076px;width:76px;text-align:right;top:728px;height:9px;font-weight:bold;-webkit-text-stroke:0.5px #000;font-size:6.7px;color:#111;-webkit-text-stroke:0.25px #111;">-</div>
<div class="gt" style="left:1165px;width:40px;text-align:right;top:728px;height:9px;font-weight:bold;-webkit-text-stroke:0.5px #000;font-size:6.7px;color:#111;-webkit-text-stroke:0.25px #111;">-</div>
<div class="gt" style="left:847px;width:85px;text-align:right;top:738px;height:9px;font-weight:bold;-webkit-text-stroke:0.5px #000;font-size:6.7px;color:#111;-webkit-text-stroke:0.25px #111;">1,607.14</div>
<div class="gt" style="left:936px;width:46px;text-align:right;top:738px;height:9px;font-weight:bold;-webkit-text-stroke:0.5px #000;font-size:6.7px;color:#111;-webkit-text-stroke:0.25px #111;">2.00</div>
<div class="gt" style="left:986px;width:86px;text-align:right;top:738px;height:9px;font-weight:bold;-webkit-text-stroke:0.5px #000;font-size:6.7px;color:#111;-webkit-text-stroke:0.25px #111;">32.14</div>
<div class="gt" style="left:1076px;width:76px;text-align:right;top:738px;height:9px;font-weight:bold;-webkit-text-stroke:0.5px #000;font-size:6.7px;color:#111;-webkit-text-stroke:0.25px #111;">-</div>
<div class="gt" style="left:1165px;width:40px;text-align:right;top:738px;height:9px;font-weight:bold;-webkit-text-stroke:0.5px #000;font-size:6.7px;color:#111;-webkit-text-stroke:0.25px #111;">-</div>
<div class="gt" style="left:847px;width:76px;text-align:right;top:748px;height:9px;font-weight:bold;-webkit-text-stroke:0.5px #000;font-size:6.7px;color:#111;-webkit-text-stroke:0.25px #111;">-</div>
<div class="gt" style="left:936px;width:37px;text-align:right;top:748px;height:9px;font-weight:bold;-webkit-text-stroke:0.5px #000;font-size:6.7px;color:#111;-webkit-text-stroke:0.25px #111;">-</div>
<div class="gt" style="left:986px;width:77px;text-align:right;top:748px;height:9px;font-weight:bold;-webkit-text-stroke:0.5px #000;font-size:6.7px;color:#111;-webkit-text-stroke:0.25px #111;">-</div>
<div class="gt" style="left:1076px;width:85px;text-align:right;top:748px;height:9px;font-weight:bold;-webkit-text-stroke:0.5px #000;font-size:6.7px;color:#111;-webkit-text-stroke:0.25px #111;">24,000.00</div>
<div class="gt" style="left:1165px;width:49px;text-align:right;top:748px;height:9px;font-weight:bold;-webkit-text-stroke:0.5px #000;font-size:6.7px;color:#111;-webkit-text-stroke:0.25px #111;">5.00</div>
<div class="gt" style="left:847px;width:76px;text-align:right;top:758px;height:9px;font-weight:bold;-webkit-text-stroke:0.5px #000;font-size:6.7px;color:#111;-webkit-text-stroke:0.25px #111;">-</div>
<div class="gt" style="left:936px;width:37px;text-align:right;top:758px;height:9px;font-weight:bold;-webkit-text-stroke:0.5px #000;font-size:6.7px;color:#111;-webkit-text-stroke:0.25px #111;">-</div>
<div class="gt" style="left:986px;width:77px;text-align:right;top:758px;height:9px;font-weight:bold;-webkit-text-stroke:0.5px #000;font-size:6.7px;color:#111;-webkit-text-stroke:0.25px #111;">-</div>
<div class="gt" style="left:1076px;width:76px;text-align:right;top:758px;height:9px;font-weight:bold;-webkit-text-stroke:0.5px #000;font-size:6.7px;color:#111;-webkit-text-stroke:0.25px #111;">-</div>
<div class="gt" style="left:1165px;width:40px;text-align:right;top:758px;height:9px;font-weight:bold;-webkit-text-stroke:0.5px #000;font-size:6.7px;color:#111;-webkit-text-stroke:0.25px #111;">-</div>
<div class="gt" style="left:847px;width:85px;text-align:right;top:768px;height:9px;font-weight:bold;-webkit-text-stroke:0.5px #000;font-size:6.7px;color:#111;-webkit-text-stroke:0.25px #111;">24,000.00</div>
<div class="gt" style="left:936px;width:46px;text-align:right;top:768px;height:9px;font-weight:bold;-webkit-text-stroke:0.5px #000;font-size:6.7px;color:#111;-webkit-text-stroke:0.25px #111;">5.00</div>
<div class="gt" style="left:986px;width:86px;text-align:right;top:768px;height:9px;font-weight:bold;-webkit-text-stroke:0.5px #000;font-size:6.7px;color:#111;-webkit-text-stroke:0.25px #111;">1,200.00</div>
<div class="gt" style="left:1076px;width:76px;text-align:right;top:768px;height:9px;font-weight:bold;-webkit-text-stroke:0.5px #000;font-size:6.7px;color:#111;-webkit-text-stroke:0.25px #111;">-</div>
<div class="gt" style="left:1165px;width:40px;text-align:right;top:768px;height:9px;font-weight:bold;-webkit-text-stroke:0.5px #000;font-size:6.7px;color:#111;-webkit-text-stroke:0.25px #111;">-</div>
<div class="gt" style="left:847px;width:76px;text-align:right;top:778px;height:9px;font-weight:bold;-webkit-text-stroke:0.5px #000;font-size:6.7px;color:#111;-webkit-text-stroke:0.25px #111;">-</div>
<div class="gt" style="left:936px;width:37px;text-align:right;top:778px;height:9px;font-weight:bold;-webkit-text-stroke:0.5px #000;font-size:6.7px;color:#111;-webkit-text-stroke:0.25px #111;">-</div>
<div class="gt" style="left:986px;width:77px;text-align:right;top:778px;height:9px;font-weight:bold;-webkit-text-stroke:0.5px #000;font-size:6.7px;color:#111;-webkit-text-stroke:0.25px #111;">-</div>
<div class="gt" style="left:1076px;width:85px;text-align:right;top:778px;height:9px;font-weight:bold;-webkit-text-stroke:0.5px #000;font-size:6.7px;color:#111;-webkit-text-stroke:0.25px #111;">26,424.28</div>
<div class="gt" style="left:1165px;width:49px;text-align:right;top:778px;height:9px;font-weight:bold;-webkit-text-stroke:0.5px #000;font-size:6.7px;color:#111;-webkit-text-stroke:0.25px #111;">1.00</div>
<div class="gt" style="left:847px;width:76px;text-align:right;top:788px;height:9px;font-weight:bold;-webkit-text-stroke:0.5px #000;font-size:6.7px;color:#111;-webkit-text-stroke:0.25px #111;">-</div>
<div class="gt" style="left:936px;width:37px;text-align:right;top:788px;height:9px;font-weight:bold;-webkit-text-stroke:0.5px #000;font-size:6.7px;color:#111;-webkit-text-stroke:0.25px #111;">-</div>
<div class="gt" style="left:986px;width:77px;text-align:right;top:788px;height:9px;font-weight:bold;-webkit-text-stroke:0.5px #000;font-size:6.7px;color:#111;-webkit-text-stroke:0.25px #111;">-</div>
<div class="gt" style="left:1076px;width:76px;text-align:right;top:788px;height:9px;font-weight:bold;-webkit-text-stroke:0.5px #000;font-size:6.7px;color:#111;-webkit-text-stroke:0.25px #111;">-</div>
<div class="gt" style="left:1165px;width:40px;text-align:right;top:788px;height:9px;font-weight:bold;-webkit-text-stroke:0.5px #000;font-size:6.7px;color:#111;-webkit-text-stroke:0.25px #111;">-</div>
<div class="gt" style="left:847px;width:85px;text-align:right;top:798px;height:9px;font-weight:bold;-webkit-text-stroke:0.5px #000;font-size:6.7px;color:#111;-webkit-text-stroke:0.25px #111;">4,277.33</div>
<div class="gt" style="left:936px;width:46px;text-align:right;top:798px;height:9px;font-weight:bold;-webkit-text-stroke:0.5px #000;font-size:6.7px;color:#111;-webkit-text-stroke:0.25px #111;">1.00</div>
<div class="gt" style="left:986px;width:86px;text-align:right;top:798px;height:9px;font-weight:bold;-webkit-text-stroke:0.5px #000;font-size:6.7px;color:#111;-webkit-text-stroke:0.25px #111;">42.77</div>
<div class="gt" style="left:1076px;width:76px;text-align:right;top:798px;height:9px;font-weight:bold;-webkit-text-stroke:0.5px #000;font-size:6.7px;color:#111;-webkit-text-stroke:0.25px #111;">-</div>
<div class="gt" style="left:1165px;width:40px;text-align:right;top:798px;height:9px;font-weight:bold;-webkit-text-stroke:0.5px #000;font-size:6.7px;color:#111;-webkit-text-stroke:0.25px #111;">-</div>
<div class="gt" style="left:847px;width:76px;text-align:right;top:808px;height:9px;font-weight:bold;-webkit-text-stroke:0.5px #000;font-size:6.7px;color:#111;-webkit-text-stroke:0.25px #111;">-</div>
<div class="gt" style="left:936px;width:37px;text-align:right;top:808px;height:9px;font-weight:bold;-webkit-text-stroke:0.5px #000;font-size:6.7px;color:#111;-webkit-text-stroke:0.25px #111;">-</div>
<div class="gt" style="left:986px;width:77px;text-align:right;top:808px;height:9px;font-weight:bold;-webkit-text-stroke:0.5px #000;font-size:6.7px;color:#111;-webkit-text-stroke:0.25px #111;">-</div>
<div class="gt" style="left:1076px;width:76px;text-align:right;top:808px;height:9px;font-weight:bold;-webkit-text-stroke:0.5px #000;font-size:6.7px;color:#111;-webkit-text-stroke:0.25px #111;">-</div>
<div class="gt" style="left:1165px;width:40px;text-align:right;top:808px;height:9px;font-weight:bold;-webkit-text-stroke:0.5px #000;font-size:6.7px;color:#111;-webkit-text-stroke:0.25px #111;">-</div>
<div class="gt" style="left:847px;width:76px;text-align:right;top:818px;height:9px;font-weight:bold;-webkit-text-stroke:0.5px #000;font-size:6.7px;color:#111;-webkit-text-stroke:0.25px #111;">-</div>
<div class="gt" style="left:936px;width:37px;text-align:right;top:818px;height:9px;font-weight:bold;-webkit-text-stroke:0.5px #000;font-size:6.7px;color:#111;-webkit-text-stroke:0.25px #111;">-</div>
<div class="gt" style="left:986px;width:77px;text-align:right;top:818px;height:9px;font-weight:bold;-webkit-text-stroke:0.5px #000;font-size:6.7px;color:#111;-webkit-text-stroke:0.25px #111;">-</div>
<div class="gt" style="left:1076px;width:76px;text-align:right;top:818px;height:9px;font-weight:bold;-webkit-text-stroke:0.5px #000;font-size:6.7px;color:#111;-webkit-text-stroke:0.25px #111;">-</div>
<div class="gt" style="left:1165px;width:40px;text-align:right;top:818px;height:9px;font-weight:bold;-webkit-text-stroke:0.5px #000;font-size:6.7px;color:#111;-webkit-text-stroke:0.25px #111;">-</div>
<div class="r" style="left:851px;top:831px;width:54px;height:1px;background:repeating-linear-gradient(90deg,#3a3a3a 0 2px,transparent 2px 3px)"></div>
<div class="r" style="left:851px;top:833px;width:54px;height:1px;background:repeating-linear-gradient(90deg,#3a3a3a 0 2px,transparent 2px 3px)"></div>
<div class="r" style="left:939px;top:831px;width:46px;height:1px;background:repeating-linear-gradient(90deg,#3a3a3a 0 2px,transparent 2px 3px)"></div>
<div class="r" style="left:939px;top:833px;width:46px;height:1px;background:repeating-linear-gradient(90deg,#3a3a3a 0 2px,transparent 2px 3px)"></div>
<div class="r" style="left:990px;top:831px;width:54px;height:1px;background:repeating-linear-gradient(90deg,#3a3a3a 0 2px,transparent 2px 3px)"></div>
<div class="r" style="left:990px;top:833px;width:54px;height:1px;background:repeating-linear-gradient(90deg,#3a3a3a 0 2px,transparent 2px 3px)"></div>
<div class="r" style="left:1080px;top:831px;width:54px;height:1px;background:repeating-linear-gradient(90deg,#3a3a3a 0 2px,transparent 2px 3px)"></div>
<div class="r" style="left:1080px;top:833px;width:54px;height:1px;background:repeating-linear-gradient(90deg,#3a3a3a 0 2px,transparent 2px 3px)"></div>
<div class="r" style="left:1170px;top:831px;width:46px;height:1px;background:repeating-linear-gradient(90deg,#3a3a3a 0 2px,transparent 2px 3px)"></div>
<div class="r" style="left:1170px;top:833px;width:46px;height:1px;background:repeating-linear-gradient(90deg,#3a3a3a 0 2px,transparent 2px 3px)"></div>
<div class="r" style="left:1222px;top:831px;width:40px;height:1px;background:repeating-linear-gradient(90deg,#3a3a3a 0 2px,transparent 2px 3px)"></div>
<div class="r" style="left:1222px;top:833px;width:40px;height:1px;background:repeating-linear-gradient(90deg,#3a3a3a 0 2px,transparent 2px 3px)"></div>
<div class="r" style="left:990px;top:851px;width:54px;height:1px;background:repeating-linear-gradient(90deg,#3a3a3a 0 2px,transparent 2px 3px)"></div>
<div class="r" style="left:990px;top:853px;width:54px;height:1px;background:repeating-linear-gradient(90deg,#3a3a3a 0 2px,transparent 2px 3px)"></div>
<div class="r" style="left:1080px;top:851px;width:54px;height:1px;background:repeating-linear-gradient(90deg,#3a3a3a 0 2px,transparent 2px 3px)"></div>
<div class="r" style="left:1080px;top:853px;width:54px;height:1px;background:repeating-linear-gradient(90deg,#3a3a3a 0 2px,transparent 2px 3px)"></div>
<div class="gt" style="left:847px;width:85px;text-align:right;top:838px;height:9px;font-weight:bold;-webkit-text-stroke:0.5px #000;font-size:6.7px;color:#111;-webkit-text-stroke:0.25px #111;">624,360.62</div>
<div class="gt" style="left:936px;width:46px;text-align:right;top:838px;height:9px;font-weight:bold;-webkit-text-stroke:0.5px #000;font-size:6.7px;color:#111;-webkit-text-stroke:0.25px #111;">48.00</div>
<div class="gt" style="left:986px;width:86px;text-align:right;top:838px;height:9px;font-weight:bold;-webkit-text-stroke:0.5px #000;font-size:6.7px;color:#111;-webkit-text-stroke:0.25px #111;">36,478.43</div>
<div class="gt" style="left:1076px;width:85px;text-align:right;top:838px;height:9px;font-weight:bold;-webkit-text-stroke:0.5px #000;font-size:6.7px;color:#111;-webkit-text-stroke:0.25px #111;">1,840,447.33</div>
<div class="gt" style="left:1165px;width:49px;text-align:right;top:838px;height:9px;font-weight:bold;-webkit-text-stroke:0.5px #000;font-size:6.7px;color:#111;-webkit-text-stroke:0.25px #111;">51.00</div>
<div class="gt" style="left:23px;width:187px;top:838px;height:9px;">Grand Total :</div>
<div class="gt" style="left:23px;width:187px;top:858px;height:9px;font-size:6.4px;">END OF REPORT</div>
<div class="r" style="left:323px;top:188px;width:1px;height:720px;background:repeating-linear-gradient(#909090 0 4px, transparent 4px 8px)"></div>
<div class="r" style="left:845px;top:188px;width:1px;height:720px;background:repeating-linear-gradient(#909090 0 4px, transparent 4px 8px)"></div>
<div class="r" style="left:1075px;top:188px;width:1px;height:720px;background:repeating-linear-gradient(#909090 0 4px, transparent 4px 8px)"></div>
<div class="r" style="left:21px;top:687px;width:1237px;height:1px;background:repeating-linear-gradient(90deg,#909090 0 4px, transparent 4px 8px)"></div>
<div class="r" style="left:321px;top:866px;width:526px;height:12px;border:2px solid #217346;box-sizing:border-box"></div>
<div class="r" style="left:843px;top:875px;width:5px;height:5px;background:#217346"></div>
<div class="r" style="left:1258px;top:176px;width:22px;height:732px;background:#e6e6e6"></div>
<div class="r" style="left:1262px;top:194px;width:15px;height:700px;background:#d8d8d8"></div>
<div class="r" style="left:1262px;top:179px;width:15px;height:15px;background:#fff;border:1px solid #a8a8a8;box-sizing:border-box"></div>
<svg class="s" style="left:1266.5px;top:184.5px" width="6" height="4"><path d="M0 4L3 0.5 6 4z" fill="#666"/></svg>
<div class="r" style="left:1262px;top:194px;width:15px;height:690px;background:#fff;border:1px solid #a8a8a8;box-sizing:border-box"></div>
<div class="r" style="left:1262px;top:894px;width:15px;height:15px;background:#fff;border:1px solid #a8a8a8;box-sizing:border-box"></div>
<svg class="s" style="left:1266.5px;top:899.5px" width="6" height="4"><path d="M0 0.5L3 4 6 0.5z" fill="#666"/></svg>
<div class="r" style="left:0px;top:908px;width:1280px;height:31px;background:#e6e6e6;"></div>
<div class="r" style="left:0px;top:908px;width:1280px;height:1px;background:#c6c6c6;"></div>
<svg class="s" style="left:26px;top:917px;" width="6" height="10" viewBox="0 0 6 10"><path d="M5 1L1 5l4 4" stroke="#bbb" fill="none"/></svg>
<svg class="s" style="left:55px;top:917px;" width="6" height="10" viewBox="0 0 6 10"><path d="M1 1l4 4-4 4" stroke="#bbb" fill="none"/></svg>
<div class="r" style="left:100px;top:908px;width:65px;height:25px;background:#ffffff;"></div>
<div class="r" style="left:100px;top:931px;width:65px;height:2px;background:#217346;"></div>
<div class="t c" style="left:100px;top:914px;width:65px;font-size:13px;font-weight:bold;color:#217346">Sheet1</div>
<svg class="s" style="left:197px;top:914px;" width="17" height="17" viewBox="0 0 17 17"><circle cx="8.5" cy="8.5" r="7.5" fill="none" stroke="#777" stroke-width="1.2"/><path d="M8.5 4.5v8M4.5 8.5h8" stroke="#777" stroke-width="1.5"/></svg>
<svg class="s" style="left:771px;top:915px;" width="3" height="14" viewBox="0 0 3 14"><path d="M1.5 0v14" stroke="#aaa" stroke-dasharray="1.5 2"/></svg>
<div class="r" style="left:785px;top:914px;width:474px;height:16px;background:#d6d6d6;border:1px solid #c0c0c0;box-sizing:border-box"></div>
<div class="r" style="left:785px;top:914px;width:15px;height:16px;background:#fff;border:1px solid #a8a8a8;box-sizing:border-box"></div>
<svg class="s" style="left:790px;top:919px;" width="5" height="7" viewBox="0 0 5 7"><path d="M4.5 0v7L0.5 3.5z" fill="#666"/></svg>
<div class="r" style="left:800px;top:914px;width:359px;height:16px;background:#fff;border:1px solid #a8a8a8;box-sizing:border-box"></div>
<div class="r" style="left:1244px;top:914px;width:15px;height:16px;background:#fff;border:1px solid #a8a8a8;box-sizing:border-box"></div>
<svg class="s" style="left:1249.5px;top:919px;" width="5" height="7" viewBox="0 0 5 7"><path d="M0.5 0v7l4-3.5z" fill="#666"/></svg>
<div class="r" style="left:0px;top:935px;width:1280px;height:4px;background:#f0f0f0;"></div>
<div class="r" style="left:980px;top:937px;width:40px;height:2px;background:#c4c4c4;"></div>
<div class="r" style="left:1032px;top:937px;width:16px;height:2px;background:#dadada;"></div>
<div class="r" style="left:1073px;top:937px;width:16px;height:2px;background:#dadada;"></div>
</div></div></body></html>
